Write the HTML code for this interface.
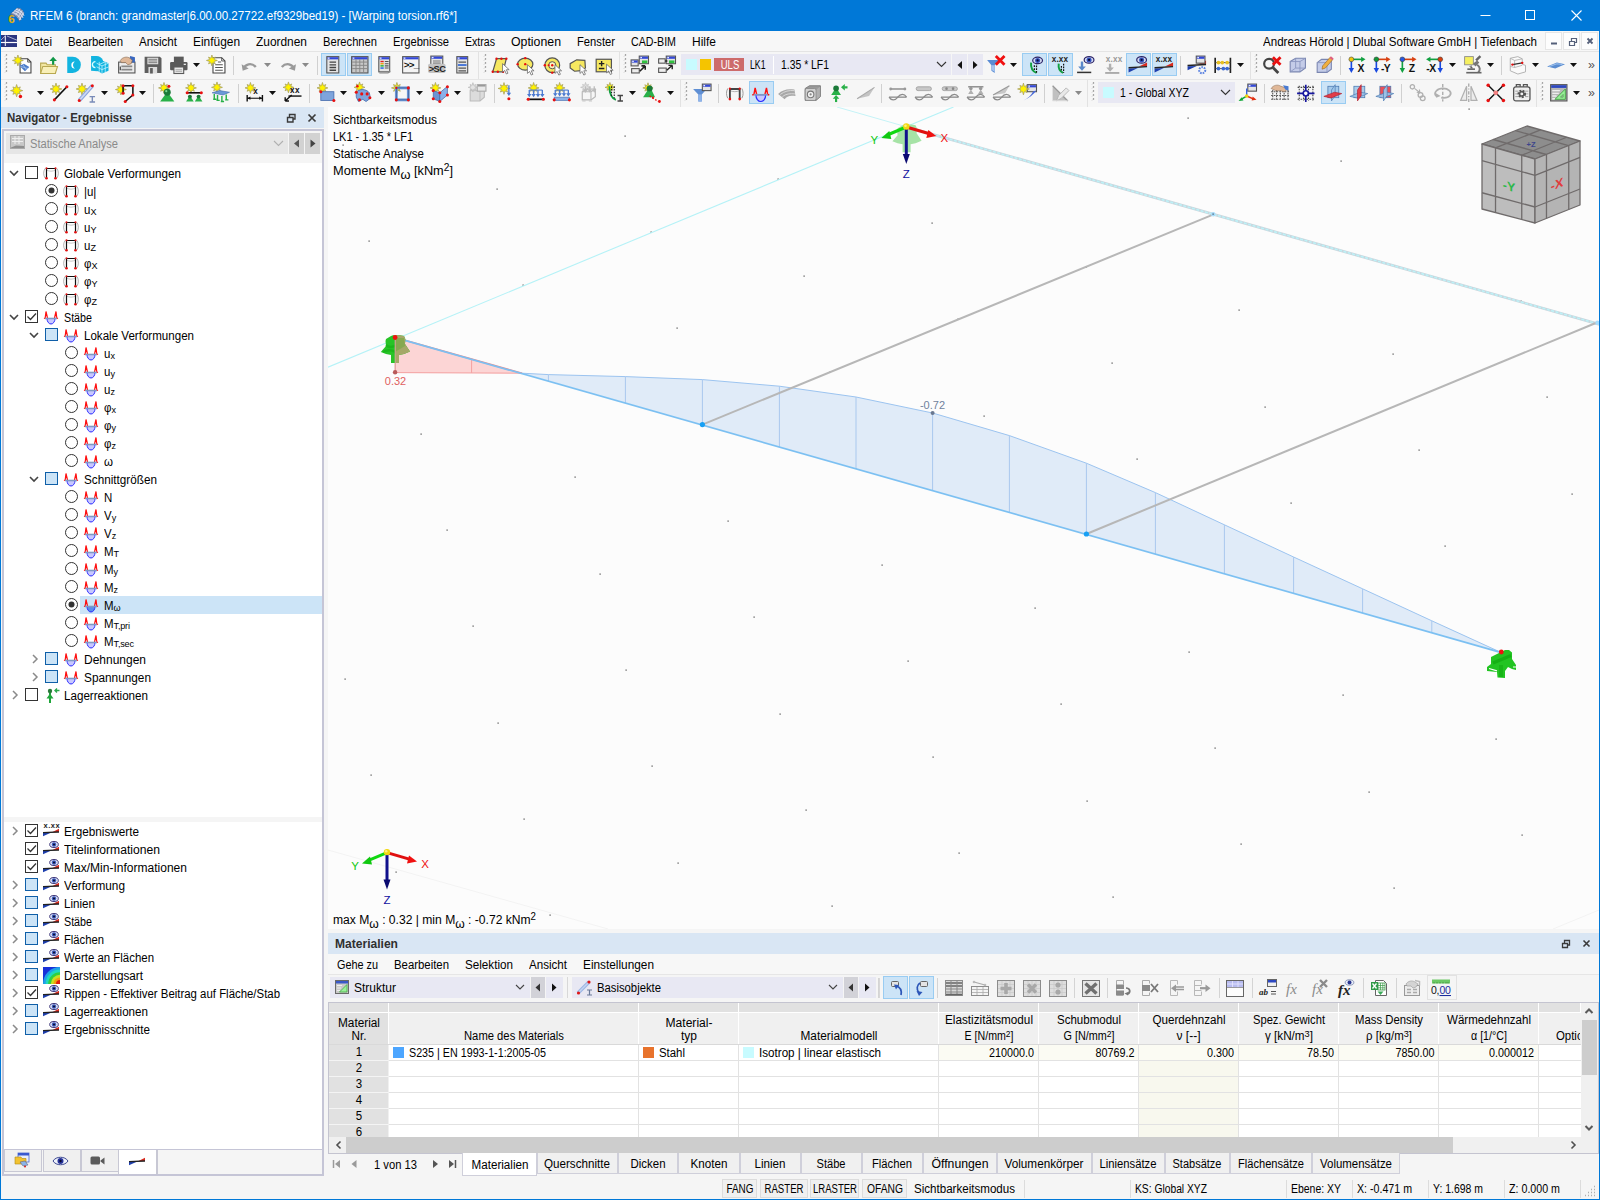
<!DOCTYPE html>
<html lang="de"><head><meta charset="utf-8"><title>RFEM 6</title><style>
html,body{margin:0;padding:0}
body{width:1600px;height:1200px;position:relative;overflow:hidden;background:#f5f5f5;font:12px "Liberation Sans",sans-serif;color:#000}
.a{position:absolute}
.t{position:absolute;white-space:nowrap}
svg{overflow:visible}
svg text{font-family:"Liberation Sans",sans-serif}
svg text.sf{font-family:"Liberation Serif",serif}
sub,sup{line-height:0}
.sb{font-size:9.5px;position:relative;top:1px;letter-spacing:-.2px}
.s2{font-size:100%;vertical-align:-3.5px}
.s3{font-size:10px;vertical-align:4px}
.s4{font-size:9.5px;vertical-align:3px}
</style></head><body>
<div class="a" style="left:0px;top:0px;width:1600px;height:31px;background:#0078d7;"></div>
<svg class="a" style="left:8px;top:7px;" width="17" height="17" viewBox="0 0 17 17"><path d="M2.500 7L9.500 1c3 0 5.500 2 6.500 5.500L11.500 14.500C10.500 11 7 8 2.500 7z" fill="#8f9ab8" stroke="#5a6484" stroke-width=".6"/><path d="M4.500 5.500c4 .8 7.500 4 8.500 7.500M6.500 3.700c4 .8 7.500 4 8.500 7.200M8 2.300c4 .8 7 3.500 8 6.500" stroke="#e8eefc" stroke-width=".9" fill="none"/><path d="M9.500 1L4.500 6.200M12 1.800L7.500 8M14.200 3.500L10 10.500M15.600 5.500L11.200 13" stroke="#dfe6f8" stroke-width=".8" fill="none"/><text x=".5" y="15.500" font-size="11" font-weight="bold" fill="#f2c21a" stroke="#a88408" stroke-width=".3">6</text></svg>
<span class="t " style="top:7.5px;line-height:16px;height:16px;color:#fff;transform:scaleX(0.9655);transform-origin:0 50%;left:30px;">RFEM 6 (branch: grandmaster|6.00.00.27722.ef9329bed19) - [Warping torsion.rf6*]</span>
<svg class="a" style="left:1470px;top:0px;" width="130" height="31" viewBox="0 0 130 31"><path d="M10.5 15.5h10" stroke="#fff" stroke-width="1" fill="none"/><rect x="55.5" y="10.5" width="9" height="9" stroke="#fff" fill="none"/><path d="M101.5 10.500l10 10M111.5 10.5l-10 10" stroke="#fff" stroke-width="1.1" fill="none"/></svg>
<div class="a" style="left:1px;top:31px;width:1598px;height:20px;background:#f7f7f7;"></div>
<div class="a" style="left:1px;top:51px;width:1598px;height:1px;background:#e4e4e4;"></div>
<svg class="a" style="left:1px;top:35px;" width="16" height="12" viewBox="0 0 16 12"><rect x="0" y="0" width="16" height="12" fill="#2a3580"/><path d="M0 7.500h16" stroke="#fff" stroke-width="1.200" fill="none"/><path d="M4.300 .5v10.500" stroke="#fff" stroke-width="1"/><path d="M0 5L4 1.200M6 1l10 4.200" stroke="#e0e4f4" stroke-width=".7" fill="none"/></svg>
<span class="t " style="top:33.5px;line-height:16px;height:16px;transform:scaleX(0.9637);transform-origin:0 50%;left:25px;">Datei</span>
<span class="t " style="top:33.5px;line-height:16px;height:16px;transform:scaleX(0.9475);transform-origin:0 50%;left:68px;">Bearbeiten</span>
<span class="t " style="top:33.5px;line-height:16px;height:16px;transform:scaleX(0.9655);transform-origin:0 50%;left:139px;">Ansicht</span>
<span class="t " style="top:33.5px;line-height:16px;height:16px;transform:scaleX(0.9921);transform-origin:0 50%;left:193px;">Einfügen</span>
<span class="t " style="top:33.5px;line-height:16px;height:16px;transform:scaleX(0.9927);transform-origin:0 50%;left:256px;">Zuordnen</span>
<span class="t " style="top:33.5px;line-height:16px;height:16px;transform:scaleX(0.9303);transform-origin:0 50%;left:323px;">Berechnen</span>
<span class="t " style="top:33.5px;line-height:16px;height:16px;transform:scaleX(0.9326);transform-origin:0 50%;left:393px;">Ergebnisse</span>
<span class="t " style="top:33.5px;line-height:16px;height:16px;transform:scaleX(0.8819);transform-origin:0 50%;left:465px;">Extras</span>
<span class="t " style="top:33.5px;line-height:16px;height:16px;transform:scaleX(1.0266);transform-origin:0 50%;left:511px;">Optionen</span>
<span class="t " style="top:33.5px;line-height:16px;height:16px;transform:scaleX(0.9339);transform-origin:0 50%;left:577px;">Fenster</span>
<span class="t " style="top:33.5px;line-height:16px;height:16px;transform:scaleX(0.8881);transform-origin:0 50%;left:631px;">CAD-BIM</span>
<span class="t " style="top:33.5px;line-height:16px;height:16px;transform:scaleX(0.9993);transform-origin:0 50%;left:692px;">Hilfe</span>
<span class="t " style="top:33.5px;line-height:16px;height:16px;transform:scaleX(0.9635);transform-origin:0 50%;left:1263px;">Andreas Hörold | Dlubal Software GmbH | Tiefenbach</span>
<div class="a" style="left:1545px;top:32px;width:17px;height:18px;background:#fdfdfd;box-sizing:border-box;border:1px solid #e6e6e6;"></div>
<div class="a" style="left:1563px;top:32px;width:17px;height:18px;background:#fdfdfd;box-sizing:border-box;border:1px solid #e6e6e6;"></div>
<div class="a" style="left:1581px;top:32px;width:17px;height:18px;background:#fdfdfd;box-sizing:border-box;border:1px solid #e6e6e6;"></div>
<svg class="a" style="left:1545px;top:32px;" width="54" height="18" viewBox="0 0 54 18"><path d="M6 11.5h6" stroke="#55607a" stroke-width="2"/><path d="M24.5 9.5h5v4h-5zM26.500 9V6.5h5v4H30" stroke="#55607a" stroke-width="1.2" fill="none"/><path d="M42.500 6.500l5 5M47.5 6.500l-5 5" stroke="#55607a" stroke-width="1.8"/></svg>
<div class="a" style="left:1px;top:52px;width:1598px;height:27px;background:#f6f6f6;"></div>
<div class="a" style="left:1px;top:79px;width:1598px;height:1px;background:#e6e6e6;"></div>
<div class="a" style="left:1px;top:80px;width:1598px;height:27px;background:#f6f6f6;"></div>
<svg class="a" style="left:4px;top:54px;" width="4" height="22" viewBox="0 0 4 22"><path d="M2 1.500l1-1M2 5.500l1-1M2 9.500l1-1M2 13.500l1-1M2 17.500l1-1" stroke="#888" stroke-width="1.200"/><path d="M1 2.500l1-1M1 6.500l1-1M1 10.500l1-1M1 14.500l1-1M1 18.500l1-1" stroke="#c8c8c8" stroke-width="1"/></svg>
<svg class="a" style="left:4px;top:82px;" width="4" height="22" viewBox="0 0 4 22"><path d="M2 1.500l1-1M2 5.500l1-1M2 9.500l1-1M2 13.500l1-1M2 17.500l1-1" stroke="#888" stroke-width="1.200"/><path d="M1 2.500l1-1M1 6.500l1-1M1 10.500l1-1M1 14.500l1-1M1 18.500l1-1" stroke="#c8c8c8" stroke-width="1"/></svg>
<svg class="a" style="left:13.2px;top:55.2px" width="19.6" height="19.6" viewBox="0 0 18 18"><path d="M6.500 3.500h7l3 3v10h-10z" fill="#fff" stroke="#444"/><path d="M13.500 3.500v3h3" fill="none" stroke="#444" stroke-width=".8"/><path d="M6 10l4-2 5 3-4 4z" fill="#4a7ac8"/><path d="M7 10.500l7 2M9 8.500l3 5" stroke="#a8c8f0" stroke-width=".7"/><path d="M4.5 -0.0L5.4 2.9L7.6 1.9L6.6 4.1L9.5 5.0L6.6 5.9L7.6 8.1L5.4 7.1L4.5 10.0L3.6 7.1L1.4 8.1L2.4 5.9L-0.5 5.0L2.4 4.1L1.4 1.9L3.6 2.9z" fill="#fff200" stroke="#a8a060" stroke-width=".7"/></svg>
<svg class="a" style="left:39.2px;top:55.2px" width="19.6" height="19.6" viewBox="0 0 18 18"><path d="M1.500 7.500h5l1 1.500h7.500v8H1.500z" fill="#f2e6a0" stroke="#b8a850"/><path d="M1.500 17l2-6.500h13.500l-2 6.500z" fill="#f8efb8" stroke="#b8a850"/><path d="M12 9V5.500h-2.500L13 1.500l3.500 4H14V9z" fill="#109848"/></svg>
<svg class="a" style="left:64.2px;top:55.2px" width="19.6" height="19.6" viewBox="0 0 18 18"><path d="M3 1.500h5a7.500 7.500 0 0 1 0 15H3z" fill="#12b4e0"/><path d="M10 6a3.300 3.300 0 1 0 0 6.600 4 4 0 0 1 0-6.600z" fill="#fff"/></svg>
<svg class="a" style="left:90.2px;top:55.2px" width="19.6" height="19.6" viewBox="0 0 18 18"><path d="M1 1h5a7 7 0 0 1 6 4L7 15l-6-.5z" fill="#12b4e0"/><path d="M5 6a2.800 2.800 0 1 0 0 5.600" fill="none" stroke="#dff" stroke-width="1.200"/><path d="M11 5l6 2.500v7L11 17 6 14V7.500z" fill="#12b4e0"/><path d="M6 7.500l5 2.500 6-2.500M11 10v7M6 10.800l5 2.600 6-2.400M8.500 6.300V15.500M14 6.200v9.500M8.500 8.700l5.500-2.500" stroke="#c8f4ff" stroke-width=".7" fill="none"/></svg>
<svg class="a" style="left:117.2px;top:55.2px" width="19.6" height="19.6" viewBox="0 0 18 18"><rect x="1.500" y="6.500" width="15" height="10" fill="#ececec" stroke="#555"/><path d="M4 10.500h10M4 13.500h10" stroke="#888" stroke-width="1.600"/><path d="M3 10.500v3.500" stroke="#333" stroke-width="1"/><path d="M12 1l4.500 1v5h-5z" fill="#3a68c0"/><path d="M3 5c2-3 6-4 9-2l2 2-1 3-3 1-2-2-4 0z" fill="#e0b898" stroke="#8a6a50" stroke-width=".6"/></svg>
<svg class="a" style="left:143.2px;top:55.2px" width="19.6" height="19.6" viewBox="0 0 18 18"><path d="M1.500 1.500h14l1.500 1.500v13.500h-15.500z" fill="#5e5e5e"/><rect x="4" y="2.500" width="10" height="6" fill="#dcdcdc"/><path d="M5 4h8M5 5.500h8M5 7h8" stroke="#777" stroke-width=".8"/><rect x="5" y="11" width="8" height="6" fill="#dcdcdc"/><rect x="6.500" y="12" width="2.500" height="5" fill="#5e5e5e"/></svg>
<svg class="a" style="left:169.2px;top:55.2px" width="19.6" height="19.6" viewBox="0 0 18 18"><rect x="4.500" y="1.500" width="9" height="5" fill="#5a5a5a"/><rect x="1" y="6.500" width="16" height="7.500" rx="1" fill="#5a5a5a"/><rect x="4.500" y="11" width="9" height="6" fill="#e8e8e8" stroke="#5a5a5a"/><path d="M6 13.500h6M6 15h6" stroke="#999" stroke-width=".7"/><rect x="13.500" y="8" width="2" height="1.200" fill="#eee"/></svg>
<svg class="a" style="left:207.2px;top:55.2px" width="19.6" height="19.6" viewBox="0 0 18 18"><path d="M5.500 2.500h8l3 3v11h-11z" fill="#fff" stroke="#444"/><path d="M13.500 2.500v3h3" fill="none" stroke="#444" stroke-width=".8"/><path d="M7.500 9h7M7.500 11.500h7M7.500 14h7M10 6.500h3" stroke="#555" stroke-width="1"/><path d="M4.5 -0.0L5.4 2.9L7.6 1.9L6.6 4.1L9.5 5.0L6.6 5.9L7.6 8.1L5.4 7.1L4.5 10.0L3.6 7.1L1.4 8.1L2.4 5.9L-0.5 5.0L2.4 4.1L1.4 1.9L3.6 2.9z" fill="#fff200" stroke="#a8a060" stroke-width=".7"/></svg>
<svg class="a" style="left:193px;top:63px;" width="8" height="5" viewBox="0 0 8 5"><path d="M0 0h7l-3.500 4z" fill="#111"/></svg>
<div class="a" style="left:233px;top:56px;width:1px;height:19px;background:#d0d0d0;"></div>
<svg class="a" style="left:240.2px;top:55.2px" width="19.6" height="19.6" viewBox="0 0 18 18"><path d="M3.500 12.500c1-4 7-6 11-1.500" stroke="#9a9a9a" stroke-width="2.200" fill="none"/><path d="M1.500 8.500l1 6 5.500-2z" fill="#9a9a9a"/></svg>
<svg class="a" style="left:264px;top:63px;" width="8" height="5" viewBox="0 0 8 5"><path d="M0 0h7l-3.500 4z" fill="#8a8a8a"/></svg>
<svg class="a" style="left:278.2px;top:55.2px" width="19.6" height="19.6" viewBox="0 0 18 18"><path d="M14.500 12.500c-1-4-7-6-11-1.500" stroke="#9a9a9a" stroke-width="2.200" fill="none"/><path d="M16.500 8.500l-1 6-5.500-2z" fill="#9a9a9a"/></svg>
<svg class="a" style="left:302px;top:63px;" width="8" height="5" viewBox="0 0 8 5"><path d="M0 0h7l-3.500 4z" fill="#8a8a8a"/></svg>
<div class="a" style="left:317px;top:56px;width:1px;height:19px;background:#d0d0d0;"></div>
<div class="a" style="left:321px;top:53px;width:25px;height:23px;background:#cce4f7;box-sizing:border-box;border:1px solid #99ccf2;"></div>
<div class="a" style="left:347px;top:53px;width:25px;height:23px;background:#cce4f7;box-sizing:border-box;border:1px solid #99ccf2;"></div>
<svg class="a" style="left:323.2px;top:55.2px" width="19.6" height="19.6" viewBox="0 0 18 18"><rect x="3.5" y="1.5" width="11" height="15" fill="#e4e4e4" stroke="#555" stroke-width="1"/><rect x="4.0" y="2.0" width="10" height="2" fill="#3348d8"/><rect x="4.5" y="2.3" width="1.500" height="1.200" fill="#e8ecff"/><path d="M6 6.500h6M6 9h6M6 11.500h6M6 14h6" stroke="#444" stroke-width="1.200"/></svg>
<svg class="a" style="left:350.2px;top:55.2px" width="19.6" height="19.6" viewBox="0 0 18 18"><rect x="1.5" y="1.5" width="15" height="15" fill="#c8c8c8" stroke="#555" stroke-width="1"/><rect x="2.0" y="2.0" width="14" height="2" fill="#3348d8"/><rect x="2.5" y="2.3" width="1.500" height="1.200" fill="#e8ecff"/><path d="M2 6.500h14M2 9.500h14M2 12.500h14M5.500 4v12M9 4v12M12.500 4v12" stroke="#888" stroke-width=".9"/></svg>
<svg class="a" style="left:375.2px;top:55.2px" width="19.6" height="19.6" viewBox="0 0 18 18"><rect x="3.5" y="1.5" width="10" height="14" fill="#e4e4e4" stroke="#555" stroke-width="1"/><rect x="4.0" y="2.0" width="9" height="2" fill="#3348d8"/><rect x="4.5" y="2.3" width="1.500" height="1.200" fill="#e8ecff"/><path d="M5 6h3" stroke="#e02020" stroke-width="1.300"/><path d="M5 8h3" stroke="#f0a010" stroke-width="1.300"/><path d="M5 10h3" stroke="#20b030" stroke-width="1.300"/><path d="M5 12h3" stroke="#2060e0" stroke-width="1.300"/><path d="M9 6h3.500M9 8h3.500M9 10h3.500M9 12h3.500" stroke="#555" stroke-width="1"/><path d="M4 16.500h8l2-2" stroke="#888" fill="none"/></svg>
<svg class="a" style="left:401.2px;top:55.2px" width="19.6" height="19.6" viewBox="0 0 18 18"><rect x="1.5" y="1.5" width="15" height="15" fill="#f4f4f4" stroke="#555" stroke-width="1"/><rect x="2.0" y="2.0" width="14" height="2" fill="#3348d8"/><rect x="2.5" y="2.3" width="1.500" height="1.200" fill="#e8ecff"/><text x="2.500" y="11.500" font-size="9" font-weight="bold" fill="#111" letter-spacing="-.6">&gt;&gt;_</text></svg>
<svg class="a" style="left:427.2px;top:55.2px" width="19.6" height="19.6" viewBox="0 0 18 18"><rect x="3.5" y="1" width="11" height="9" fill="#e4e4e4" stroke="#555" stroke-width="1"/><rect x="4.0" y="1.5" width="10" height="2" fill="#3348d8"/><rect x="4.5" y="1.8" width="1.500" height="1.200" fill="#e8ecff"/><path d="M5.500 5.500h7M5.500 7.500h7" stroke="#777"/><rect x="1" y="8" width="16" height="8.500" rx="1.500" fill="#c4c4c4"/><text x="1.500" y="15.500" font-size="8.500" font-weight="bold" fill="#222" letter-spacing="-.4">&gt;SC</text></svg>
<svg class="a" style="left:453.2px;top:55.2px" width="19.6" height="19.6" viewBox="0 0 18 18"><rect x="3.5" y="1.5" width="10" height="15" fill="#e4e4e4" stroke="#555" stroke-width="1"/><rect x="4.0" y="2.0" width="9" height="2" fill="#3348d8"/><rect x="4.5" y="2.3" width="1.500" height="1.200" fill="#e8ecff"/><path d="M5 6.500h7M5 12h7M5 14.500h7" stroke="#555" stroke-width="1.100"/><path d="M4.500 9.200h8" stroke="#4a78d8" stroke-width="1.800"/></svg>
<div class="a" style="left:478px;top:52px;width:1px;height:27px;background:#e2e2e2;"></div>
<svg class="a" style="left:483px;top:54px;" width="4" height="22" viewBox="0 0 4 22"><path d="M2 1.500l1-1M2 5.500l1-1M2 9.500l1-1M2 13.500l1-1M2 17.500l1-1" stroke="#888" stroke-width="1.200"/><path d="M1 2.500l1-1M1 6.500l1-1M1 10.500l1-1M1 14.500l1-1M1 18.500l1-1" stroke="#c8c8c8" stroke-width="1"/></svg>
<svg class="a" style="left:490.2px;top:56.2px" width="19.6" height="19.6" viewBox="0 0 18 18"><path d="M6 2.500h9L12 14.500H2.500z" fill="#f6e860" stroke="#555" stroke-width="1.100"/><circle cx="6" cy="2.5" r="1.1" fill="#e81010"/><circle cx="15" cy="2.5" r="1.1" fill="#e81010"/><circle cx="2.5" cy="14.5" r="1.1" fill="#e81010"/><circle cx="12" cy="14.5" r="1.1" fill="#e81010"/><circle cx="10.5" cy="2.5" r="1.1" fill="#e81010"/><circle cx="7.2" cy="14.5" r="1.1" fill="#e81010"/><path d="M11.5 7v8l2-1.800 1.500 3.300 1.500-.7-1.500-3.200h2.600z" fill="#fff" stroke="#666" stroke-width=".7"/></svg>
<svg class="a" style="left:516.2px;top:56.2px" width="19.6" height="19.6" viewBox="0 0 18 18"><ellipse cx="8.500" cy="7.500" rx="7" ry="5.500" fill="#f6e860" stroke="#555" stroke-width="1.100"/><circle cx="8.5" cy="2" r="1.1" fill="#e81010"/><circle cx="1.5" cy="7.5" r="1.1" fill="#e81010"/><circle cx="8.5" cy="7.5" r="1.1" fill="#e81010"/><path d="M10.5 8v8l2-1.800 1.500 3.300 1.500-.7-1.500-3.200h2.600z" fill="#fff" stroke="#666" stroke-width=".7"/></svg>
<svg class="a" style="left:543.2px;top:56.2px" width="19.6" height="19.6" viewBox="0 0 18 18"><circle cx="8.500" cy="8.500" r="6.800" fill="#f6e860" stroke="#555" stroke-width="1.100"/><circle cx="8.500" cy="8.500" r="3.300" fill="#fbf6c0" stroke="#555" stroke-width=".9"/><circle cx="8.5" cy="8.5" r="1.1" fill="#e81010"/><circle cx="1.7" cy="8.5" r="1.1" fill="#e81010"/><circle cx="8.5" cy="15.3" r="1.1" fill="#e81010"/><circle cx="5.2" cy="8.5" r="1" fill="#e81010"/><path d="M11 8v8l2-1.800 1.500 3.300 1.500-.7-1.500-3.200h2.600z" fill="#fff" stroke="#666" stroke-width=".7"/></svg>
<svg class="a" style="left:568.2px;top:56.2px" width="19.6" height="19.6" viewBox="0 0 18 18"><path d="M2 7l6-3.500 7.500.5L16 11l-4 2.500-6 .5-4-3z" fill="#f6e860" stroke="#555" stroke-width="1.100"/><path d="M11 8v8l2-1.800 1.500 3.300 1.500-.7-1.500-3.200h2.600z" fill="#fff" stroke="#666" stroke-width=".7"/></svg>
<svg class="a" style="left:594.2px;top:56.2px" width="19.6" height="19.6" viewBox="0 0 18 18"><rect x="2" y="3" width="14" height="11.500" fill="#f6e860" stroke="#555" stroke-width="1.100"/><path d="M4.500 7h5M7 4.500v5M4.500 11.500h5" stroke="#222" stroke-width="1.300"/><path d="M11.5 7.5v8l2-1.800 1.500 3.300 1.500-.7-1.500-3.200h2.600z" fill="#fff" stroke="#666" stroke-width=".7"/></svg>
<div class="a" style="left:619px;top:52px;width:1px;height:27px;background:#e2e2e2;"></div>
<svg class="a" style="left:623px;top:54px;" width="4" height="22" viewBox="0 0 4 22"><path d="M2 1.500l1-1M2 5.500l1-1M2 9.500l1-1M2 13.500l1-1M2 17.500l1-1" stroke="#888" stroke-width="1.200"/><path d="M1 2.500l1-1M1 6.500l1-1M1 10.500l1-1M1 14.500l1-1M1 18.500l1-1" stroke="#c8c8c8" stroke-width="1"/></svg>
<svg class="a" style="left:630.2px;top:55.2px" width="19.6" height="19.6" viewBox="0 0 18 18"><rect x="8.5" y="1" width="8.5" height="7" fill="#e4e4e4" stroke="#555" stroke-width="1"/><rect x="9.0" y="1.5" width="7.5" height="2" fill="#3348d8"/><rect x="9.5" y="1.8" width="1.500" height="1.200" fill="#e8ecff"/><rect x="11" y="5" width="5" height="2.500" fill="#30c040"/><rect x="1" y="4.5" width="6.5" height="5.5" fill="#e4e4e4" stroke="#555" stroke-width="1"/><rect x="1.5" y="5.0" width="5.5" height="2" fill="#3348d8"/><rect x="2" y="5.3" width="1.500" height="1.200" fill="#e8ecff"/><rect x="1.500" y="12.500" width="7" height="4" fill="#eee" stroke="#555"/><path d="M9 15l5-5M14 10v3.500M14 10h-3.500" stroke="#222" stroke-width="1.400" fill="none"/></svg>
<svg class="a" style="left:657.2px;top:55.2px" width="19.6" height="19.6" viewBox="0 0 18 18"><rect x="8.5" y="1" width="8.5" height="7" fill="#e4e4e4" stroke="#555" stroke-width="1"/><rect x="9.0" y="1.5" width="7.5" height="2" fill="#3348d8"/><rect x="9.5" y="1.8" width="1.500" height="1.200" fill="#e8ecff"/><rect x="11" y="5" width="5" height="2.500" fill="#30c040"/><rect x="1.500" y="3.500" width="6" height="4" fill="#eee" stroke="#555"/><rect x="1.500" y="12" width="7" height="4" fill="#eee" stroke="#555"/><path d="M7.500 5.500h2M9 14l5-4.500M14 9.500v3.500M14 9.500h-3.500" stroke="#222" stroke-width="1.300" fill="none"/></svg>
<div class="a" style="left:681px;top:54px;width:270px;height:21px;background:#e8e8f3;"></div>
<div class="a" style="left:686px;top:59px;width:11px;height:11px;background:#c8fbff;"></div>
<div class="a" style="left:700px;top:59px;width:11px;height:11px;background:#f5c400;"></div>
<div class="a" style="left:714px;top:58px;width:30px;height:13px;background:#cd6b6b;"></div>
<span class="t " style="top:56.5px;line-height:16px;height:16px;color:#fff;transform:scaleX(0.7925);transform-origin:50% 50%;left:429.5px;width:600px;text-align:center;">ULS</span>
<span class="t " style="top:56.5px;line-height:16px;height:16px;transform:scaleX(0.7257);transform-origin:0 50%;left:749.5px;">LK1</span>
<div class="a" style="left:773px;top:56px;width:1px;height:18px;background:#fff;"></div>
<span class="t " style="top:56.5px;line-height:16px;height:16px;transform:scaleX(0.8668);transform-origin:0 50%;left:781px;">1.35 * LF1</span>
<svg class="a" style="left:936px;top:61px;" width="12" height="7" viewBox="0 0 12 7"><path d="M1 1l4.500 4.500L10 1" stroke="#333" stroke-width="1.100" fill="none"/></svg>
<div class="a" style="left:952px;top:54px;width:15px;height:21px;background:#e8e8f3;"></div>
<div class="a" style="left:968px;top:54px;width:15px;height:21px;background:#e8e8f3;"></div>
<svg class="a" style="left:952px;top:54px;" width="31" height="22" viewBox="0 0 31 22"><path d="M10 7v8l-4.500-4z" fill="#111"/><path d="M21 7v8l4.500-4z" fill="#111"/></svg>
<svg class="a" style="left:986.2px;top:55.2px" width="19.6" height="19.6" viewBox="0 0 18 18"><path d="M1 4.500h11l-4 5v7l-3-2V9.500z" fill="#5a8cd4"/><path d="M5.500 9.500h2.500v6l-2.500-1.500z" fill="#a4c4f0"/><path d="M9 1l8 8M17 1l-8 8" stroke="#f01010" stroke-width="2.600"/></svg>
<svg class="a" style="left:1010px;top:63px;" width="8" height="5" viewBox="0 0 8 5"><path d="M0 0h7l-3.500 4z" fill="#111"/></svg>
<div class="a" style="left:1022px;top:53px;width:25px;height:23px;background:#cce4f7;box-sizing:border-box;border:1px solid #99ccf2;"></div>
<div class="a" style="left:1048px;top:53px;width:25px;height:23px;background:#cce4f7;box-sizing:border-box;border:1px solid #99ccf2;"></div>
<svg class="a" style="left:1024.2px;top:55.2px" width="19.6" height="19.6" viewBox="0 0 18 18"><path d="M6.500 7c-.5 5 1.500 8 5 9.500" stroke="#12a040" stroke-width="1.800" fill="none"/><path d="M11.500 7v9.500M9.500 9.500v5" stroke="#111" stroke-width="1.100" stroke-dasharray="1.600 1"/><ellipse cx="12.5" cy="5" rx="4.500" ry="3" fill="#d4dcf2" stroke="#2c2468" stroke-width="1.100"/><circle cx="12.5" cy="5" r="2.300" fill="#3452c0"/><circle cx="12.5" cy="5" r="1" fill="#0a0a30"/></svg>
<svg class="a" style="left:1050.2px;top:55.2px" width="19.6" height="19.6" viewBox="0 0 18 18"><path d="M8 8c-.5 4 1 7 4 8.500" stroke="#12a040" stroke-width="1.800" fill="none"/><path d="M12.500 8v8.500M10.500 10v5" stroke="#111" stroke-width="1.100" stroke-dasharray="1.600 1"/><text x="1.5" y="6.5" font-size="7.5" font-weight="bold" fill="#222" letter-spacing=".2">x.xx</text></svg>
<svg class="a" style="left:1076.2px;top:55.2px" width="19.6" height="19.6" viewBox="0 0 18 18"><path d="M5.500 6v5" stroke="#5a88c8" stroke-width="2.200"/><path d="M2 10.500h7l-3.500 4z" fill="#5a88c8"/><path d="M1 16h13" stroke="#333" stroke-width="1.400"/><ellipse cx="12" cy="4.5" rx="4.500" ry="3" fill="#d4dcf2" stroke="#2c2468" stroke-width="1.100"/><circle cx="12" cy="4.5" r="2.300" fill="#3452c0"/><circle cx="12" cy="4.5" r="1" fill="#0a0a30"/></svg>
<svg class="a" style="left:1103.2px;top:55.2px" width="19.6" height="19.6" viewBox="0 0 18 18"><path d="M6.500 8v4" stroke="#b0b0b0" stroke-width="2.200"/><path d="M3 11.500h7l-3.500 4z" fill="#b0b0b0"/><path d="M2 16.500h13" stroke="#999" stroke-width="1.400"/><text x="2.5" y="6.5" font-size="7.5" font-weight="bold" fill="#999" letter-spacing=".2">x.xx</text></svg>
<div class="a" style="left:1126px;top:53px;width:25px;height:23px;background:#cce4f7;box-sizing:border-box;border:1px solid #99ccf2;"></div>
<div class="a" style="left:1152px;top:53px;width:25px;height:23px;background:#cce4f7;box-sizing:border-box;border:1px solid #99ccf2;"></div>
<svg class="a" style="left:1128.2px;top:55.2px" width="19.6" height="19.6" viewBox="0 0 18 18"><path d="M.5 12.3V16L9 12z" fill="#1e3fae"/><path d="M10 10.6L17.500 7V10.6z" fill="#d62a1e"/><path d="M.5 11.7L17.500 10.7" stroke="#222" stroke-width="1.300"/><ellipse cx="12.5" cy="4.5" rx="4.500" ry="3" fill="#d4dcf2" stroke="#2c2468" stroke-width="1.100"/><circle cx="12.5" cy="4.5" r="2.300" fill="#3452c0"/><circle cx="12.5" cy="4.5" r="1" fill="#0a0a30"/></svg>
<svg class="a" style="left:1154.2px;top:55.2px" width="19.6" height="19.6" viewBox="0 0 18 18"><path d="M.5 12.3V16L9 12z" fill="#1e3fae"/><path d="M10 10.6L17.500 7V10.6z" fill="#d62a1e"/><path d="M.5 11.7L17.500 10.7" stroke="#222" stroke-width="1.300"/><text x="1.5" y="6.5" font-size="7.5" font-weight="bold" fill="#222" letter-spacing=".2">x.xx</text></svg>
<div class="a" style="left:1180px;top:56px;width:1px;height:19px;background:#d0d0d0;"></div>
<svg class="a" style="left:1187.2px;top:55.2px" width="19.6" height="19.6" viewBox="0 0 18 18"><path d="M.5 10.3V14L9 10z" fill="#1e3fae"/><path d="M10 8.6L17.500 5V8.6z" fill="#d62a1e"/><path d="M.5 9.7L17.500 8.7" stroke="#222" stroke-width="1.300"/><rect x="8.5" y="1" width="8" height="6.5" fill="#e4e4e4" stroke="#555" stroke-width="1"/><rect x="9.0" y="1.5" width="7" height="2" fill="#3348d8"/><rect x="9.5" y="1.8" width="1.500" height="1.200" fill="#e8ecff"/><circle cx="14" cy="14" r="2.800" fill="none" stroke="#5a82e0" stroke-width="1.800" stroke-dasharray="1.500 .9"/></svg>
<svg class="a" style="left:1213.2px;top:55.2px" width="19.6" height="19.6" viewBox="0 0 18 18"><path d="M2 2.500v14M16 2.500v14" stroke="#222" stroke-width="1.500"/><path d="M2 7h14M2 12.500h14" stroke="#444" stroke-width=".8"/><circle cx="5" cy="7" r="1.700" fill="#e8c020"/><circle cx="8.500" cy="7" r="1.700" fill="#e8c020"/><circle cx="13" cy="7" r="1.700" fill="#e8c020"/><circle cx="5" cy="12.500" r="1.700" fill="#3a68d0"/><circle cx="9.500" cy="12.500" r="1.700" fill="#3a68d0"/><circle cx="13" cy="12.500" r="1.700" fill="#3a68d0"/></svg>
<svg class="a" style="left:1237px;top:63px;" width="8" height="5" viewBox="0 0 8 5"><path d="M0 0h7l-3.500 4z" fill="#111"/></svg>
<div class="a" style="left:1250px;top:52px;width:1px;height:27px;background:#e2e2e2;"></div>
<svg class="a" style="left:1254px;top:54px;" width="4" height="22" viewBox="0 0 4 22"><path d="M2 1.500l1-1M2 5.500l1-1M2 9.500l1-1M2 13.500l1-1M2 17.500l1-1" stroke="#888" stroke-width="1.200"/><path d="M1 2.500l1-1M1 6.500l1-1M1 10.500l1-1M1 14.500l1-1M1 18.500l1-1" stroke="#c8c8c8" stroke-width="1"/></svg>
<svg class="a" style="left:1262.2px;top:55.2px" width="19.6" height="19.6" viewBox="0 0 18 18"><circle cx="6.500" cy="8" r="4.500" fill="none" stroke="#444" stroke-width="2"/><path d="M10 11.500l5 5" stroke="#444" stroke-width="2.600"/><path d="M10 2l7 7M17 2l-7 7" stroke="#e81010" stroke-width="2.600"/></svg>
<svg class="a" style="left:1288.2px;top:55.2px" width="19.6" height="19.6" viewBox="0 0 18 18"><path d="M2 6l5-3h9v9l-5 3.500H2z" fill="#c4cce8" stroke="#7a86b0"/><path d="M2 6h9v9.500M11 6l5-3M7 3v9H16M7 12l-5 3.500" stroke="#8a96c0" stroke-width=".8" fill="none"/></svg>
<svg class="a" style="left:1315.2px;top:55.2px" width="19.6" height="19.6" viewBox="0 0 18 18"><path d="M2 7l4-3h9v9l-4 3H2z" fill="#c4cce8" stroke="#7a86b0"/><path d="M2 7h9v9M11 7l4-3" stroke="#8a96c0" stroke-width=".8" fill="none"/><path d="M7 10l7-8 2.500 2-7 8-3 1z" fill="#f0b040" stroke="#a06a20" stroke-width=".6"/><path d="M14 2l2.500 2" stroke="#e06080" stroke-width="2"/></svg>
<div class="a" style="left:1340px;top:56px;width:1px;height:19px;background:#d0d0d0;"></div>
<svg class="a" style="left:1347.2px;top:55.2px" width="19.6" height="19.6" viewBox="0 0 18 18"><path d="M4 4h10" stroke="#10a040" stroke-width="1.500"/><path d="M13 1.500l4 2.500-4 2.500z" fill="#10a040"/><path d="M4 4v9" stroke="#1848e0" stroke-width="1.500"/><path d="M1.500 12h5L4 16.500z" fill="#1848e0"/><circle cx="4" cy="4" r="2.200" fill="#f0c810" stroke="#333" stroke-width=".5"/><text x="12.500" y="16" font-size="9.500" font-weight="bold" fill="#111" text-anchor="middle" letter-spacing="-.5">X</text></svg>
<svg class="a" style="left:1372.2px;top:55.2px" width="19.6" height="19.6" viewBox="0 0 18 18"><path d="M4 4h10" stroke="#d84010" stroke-width="1.500"/><path d="M13 1.500l4 2.500-4 2.500z" fill="#d84010"/><path d="M4 4v9" stroke="#1848e0" stroke-width="1.500"/><path d="M1.500 12h5L4 16.500z" fill="#1848e0"/><circle cx="4" cy="4" r="2.200" fill="#109838" stroke="#333" stroke-width=".5"/><text x="12.500" y="16" font-size="9.500" font-weight="bold" fill="#111" text-anchor="middle" letter-spacing="-.5">-Y</text></svg>
<svg class="a" style="left:1398.2px;top:55.2px" width="19.6" height="19.6" viewBox="0 0 18 18"><path d="M4 4h10" stroke="#d84010" stroke-width="1.500"/><path d="M13 1.500l4 2.500-4 2.500z" fill="#d84010"/><path d="M4 4v9" stroke="#10a040" stroke-width="1.500"/><path d="M1.500 12h5L4 16.500z" fill="#10a040"/><circle cx="4" cy="4" r="2.200" fill="#2858e0" stroke="#333" stroke-width=".5"/><text x="12.500" y="16" font-size="9.500" font-weight="bold" fill="#111" text-anchor="middle" letter-spacing="-.5">Z</text></svg>
<svg class="a" style="left:1425.2px;top:55.2px" width="19.6" height="19.6" viewBox="0 0 18 18"><path d="M14 4H4" stroke="#10a040" stroke-width="1.500"/><path d="M5 1.500L1 4l4 2.500z" fill="#10a040"/><path d="M14 4v9" stroke="#1848e0" stroke-width="1.500"/><path d="M11.500 12h5L14 16.500z" fill="#1848e0"/><circle cx="14" cy="4" r="2.200" fill="#d84010" stroke="#333" stroke-width=".5"/><text x="5.500" y="16" font-size="9.500" font-weight="bold" fill="#111" text-anchor="middle" letter-spacing="-.5">-X</text></svg>
<svg class="a" style="left:1449px;top:63px;" width="8" height="5" viewBox="0 0 8 5"><path d="M0 0h7l-3.500 4z" fill="#111"/></svg>
<svg class="a" style="left:1463.2px;top:55.2px" width="19.6" height="19.6" viewBox="0 0 18 18"><rect x="1.500" y="1.500" width="8" height="7.500" fill="#f6f060" stroke="#888" stroke-width=".8"/><path d="M12 5l4-4" stroke="#666" stroke-width="2.200"/><path d="M9 8l4-3 2 2-3.500 3.500z" fill="#777"/><path d="M13 9c3 2 3 5 1 7" stroke="#777" stroke-width="1.800" fill="none"/><path d="M3 17h14v-1.500H3z" fill="#666"/><path d="M4 13h7" stroke="#666" stroke-width="1.500"/><path d="M6 10.500l3 1.500M7.500 9.500v3" stroke="#555" stroke-width=".8"/></svg>
<svg class="a" style="left:1487px;top:63px;" width="8" height="5" viewBox="0 0 8 5"><path d="M0 0h7l-3.500 4z" fill="#111"/></svg>
<div class="a" style="left:1501px;top:56px;width:1px;height:19px;background:#d0d0d0;"></div>
<svg class="a" style="left:1507.2px;top:55.2px" width="19.6" height="19.6" viewBox="0 0 18 18"><path d="M3 3l7-1.500 4 2v5l3 1v6l-7 2-7-3z" fill="#fafafa" stroke="#aaa" stroke-width=".8"/><path d="M3 3l4 2 7-1.500M7 5v6.500l-4-1M7 11.500l7-2" stroke="#aaa" stroke-width=".7" fill="none"/><path d="M5 8.800l9-1.600" stroke="#333" stroke-width="1.300"/><circle cx="5" cy="8.8" r="1.1" fill="#e81010"/><circle cx="14" cy="7.2" r="1.1" fill="#e81010"/></svg>
<svg class="a" style="left:1532px;top:63px;" width="8" height="5" viewBox="0 0 8 5"><path d="M0 0h7l-3.500 4z" fill="#111"/></svg>
<svg class="a" style="left:1546.2px;top:55.2px" width="19.6" height="19.6" viewBox="0 0 18 18"><path d="M1 10.500l9-3.500 7.500 1.500-9 4z" fill="#5a8cd0"/><path d="M3 10.500l7-2.500 5 .8" stroke="#9cc0ec" stroke-width="1" fill="none"/></svg>
<svg class="a" style="left:1570px;top:63px;" width="8" height="5" viewBox="0 0 8 5"><path d="M0 0h7l-3.500 4z" fill="#111"/></svg>
<span class="t " style="top:56.5px;line-height:16px;height:16px;font-size:13px;color:#555;transform:scaleX(0.9550);transform-origin:0 50%;left:1588px;">»</span>
<svg class="a" style="left:9.2px;top:83.2px" width="19.6" height="19.6" viewBox="0 0 18 18"><path d="M7.0 1.4L8.0 4.6L10.4 3.6L9.4 6.0L12.6 7.0L9.4 8.0L10.4 10.4L8.0 9.4L7.0 12.6L6.0 9.4L3.6 10.4L4.6 8.0L1.4 7.0L4.6 6.0L3.6 3.6L6.0 4.6z" fill="#fff200" stroke="#a8a060" stroke-width=".7"/><circle cx="10.5" cy="12.5" r="1.6" fill="#e81010"/></svg>
<svg class="a" style="left:37px;top:91px;" width="8" height="5" viewBox="0 0 8 5"><path d="M0 0h7l-3.500 4z" fill="#111"/></svg>
<svg class="a" style="left:50.2px;top:83.2px" width="19.6" height="19.6" viewBox="0 0 18 18"><path d="M5.5 0.1L6.4 3.2L8.8 2.2L7.8 4.6L10.9 5.5L7.8 6.4L8.8 8.8L6.4 7.8L5.5 10.9L4.6 7.8L2.2 8.8L3.2 6.4L0.1 5.5L3.2 4.6L2.2 2.2L4.6 3.2z" fill="#fff200" stroke="#a8a060" stroke-width=".7"/><path d="M4 15.500L15.500 3.500" stroke="#111" stroke-width="1.500"/><circle cx="4" cy="15.5" r="1.4" fill="#e81010"/><circle cx="15.5" cy="3.5" r="1.4" fill="#e81010"/></svg>
<svg class="a" style="left:76.2px;top:83.2px" width="19.6" height="19.6" viewBox="0 0 18 18"><path d="M5.5 0.1L6.4 3.2L8.8 2.2L7.8 4.6L10.9 5.5L7.8 6.4L8.8 8.8L6.4 7.8L5.5 10.9L4.6 7.8L2.2 8.8L3.2 6.4L0.1 5.5L3.2 4.6L2.2 2.2L4.6 3.2z" fill="#fff200" stroke="#a8a060" stroke-width=".7"/><path d="M3 16L15 2.500" stroke="#8aa4dc" stroke-width="3.500"/><path d="M3 16L15 2.500" stroke="#ccd8f4" stroke-width="1.500"/><circle cx="3" cy="16" r="1.4" fill="#e81010"/><circle cx="15" cy="2.5" r="1.4" fill="#e81010"/><path d="M12.500 12.500h5M15 12.500v5M12.500 17.500h5" stroke="#7a8cb8" stroke-width="1.300"/></svg>
<svg class="a" style="left:101px;top:91px;" width="8" height="5" viewBox="0 0 8 5"><path d="M0 0h7l-3.500 4z" fill="#111"/></svg>
<svg class="a" style="left:116.2px;top:83.2px" width="19.6" height="19.6" viewBox="0 0 18 18"><path d="M4.5 1.0L5.4 3.9L7.6 2.9L6.6 5.1L9.5 6.0L6.6 6.9L7.6 9.1L5.4 8.1L4.5 11.0L3.6 8.1L1.4 9.1L2.4 6.9L-0.5 6.0L2.4 5.1L1.4 2.9L3.6 3.9z" fill="#fff200" stroke="#a8a060" stroke-width=".7"/><path d="M6.500 9V2.500h9V11l-7 6" stroke="#111" stroke-width="1.400" fill="none"/><circle cx="6.5" cy="2.5" r="1.4" fill="#e81010"/><circle cx="15.5" cy="2.5" r="1.4" fill="#e81010"/><circle cx="6.5" cy="9.5" r="1.4" fill="#e81010"/><circle cx="15.5" cy="11" r="1.4" fill="#e81010"/><circle cx="8.5" cy="17" r="1.4" fill="#e81010"/></svg>
<svg class="a" style="left:139px;top:91px;" width="8" height="5" viewBox="0 0 8 5"><path d="M0 0h7l-3.500 4z" fill="#111"/></svg>
<div class="a" style="left:153px;top:84px;width:1px;height:19px;background:#d0d0d0;"></div>
<svg class="a" style="left:158.2px;top:83.2px" width="19.6" height="19.6" viewBox="0 0 18 18"><path d="M5.5 -0.5L6.4 2.4L8.6 1.4L7.6 3.6L10.5 4.5L7.6 5.4L8.6 7.6L6.4 6.6L5.5 9.5L4.6 6.6L2.4 7.6L3.4 5.4L0.5 4.5L3.4 3.6L2.4 1.4L4.6 2.4z" fill="#fff200" stroke="#a8a060" stroke-width=".7"/><circle cx="10" cy="3" r="1.4" fill="#e81010"/><path d="M2 17l5-7h3l5 7z" fill="#28b048"/><circle cx="8.500" cy="8.500" r="3.200" fill="#1a7a38"/><circle cx="7.600" cy="7.500" r="1" fill="#7ad890"/></svg>
<svg class="a" style="left:185.2px;top:83.2px" width="19.6" height="19.6" viewBox="0 0 18 18"><path d="M5.5 -0.5L6.4 2.4L8.6 1.4L7.6 3.6L10.5 4.5L7.6 5.4L8.6 7.6L6.4 6.6L5.5 9.5L4.6 6.6L2.4 7.6L3.4 5.4L0.5 4.5L3.4 3.6L2.4 1.4L4.6 2.4z" fill="#fff200" stroke="#a8a060" stroke-width=".7"/><path d="M2 9h13" stroke="#111" stroke-width="1.500"/><circle cx="2" cy="9" r="1.4" fill="#e81010"/><circle cx="15" cy="9" r="1.4" fill="#e81010"/><path d="M1 17l2.500-4h2l2.500 4zM9 17l2.500-4h2l2.500 4z" fill="#28b048"/><circle cx="4.500" cy="12.500" r="1.800" fill="#1a7a38"/><circle cx="12.500" cy="12.500" r="1.800" fill="#1a7a38"/></svg>
<svg class="a" style="left:211.2px;top:83.2px" width="19.6" height="19.6" viewBox="0 0 18 18"><path d="M5.5 -1.0L6.4 1.9L8.6 0.9L7.6 3.1L10.5 4.0L7.6 4.9L8.6 7.1L6.4 6.1L5.5 9.0L4.6 6.1L2.4 7.1L3.4 4.9L0.5 4.0L3.4 3.1L2.4 0.9L4.6 1.9z" fill="#fff200" stroke="#a8a060" stroke-width=".7"/><path d="M1 9l7-2 9 1.500-6 2.500z" fill="#6a9ad8" stroke="#4a70b0" stroke-width=".6"/><path d="M3 10v5M6 11v5M10 12v5M14 10.500v5M2 15h3M5 16h3M9 17h3M13 15.500h3" stroke="#28b048" stroke-width="1.300"/></svg>
<div class="a" style="left:238px;top:84px;width:1px;height:19px;background:#d0d0d0;"></div>
<svg class="a" style="left:245.2px;top:83.2px" width="19.6" height="19.6" viewBox="0 0 18 18"><path d="M5.0 -0.5L5.9 2.4L8.1 1.4L7.1 3.6L10.0 4.5L7.1 5.4L8.1 7.6L5.9 6.6L5.0 9.5L4.1 6.6L1.9 7.6L2.9 5.4L-0.0 4.5L2.9 3.6L1.9 1.4L4.1 2.4z" fill="#fff200" stroke="#a8a060" stroke-width=".7"/><path d="M2 11v6M16 11v6" stroke="#111" stroke-width="1.300"/><path d="M2 14h14" stroke="#111" stroke-width="1"/><path d="M2 14l3-1.500v3zM16 14l-3-1.500v3z" fill="#111"/><text x="7.500" y="10.500" font-size="7.500" font-weight="bold" fill="#111">x</text></svg>
<svg class="a" style="left:269px;top:91px;" width="8" height="5" viewBox="0 0 8 5"><path d="M0 0h7l-3.500 4z" fill="#111"/></svg>
<svg class="a" style="left:283.2px;top:83.2px" width="19.6" height="19.6" viewBox="0 0 18 18"><path d="M5.0 -1.0L5.9 1.9L8.1 0.9L7.1 3.1L10.0 4.0L7.1 4.9L8.1 7.1L5.9 6.1L5.0 9.0L4.1 6.1L1.9 7.1L2.9 4.9L-0.0 4.0L2.9 3.1L1.9 0.9L4.1 1.9z" fill="#fff200" stroke="#a8a060" stroke-width=".7"/><text x="6.500" y="9.500" font-size="7.500" font-weight="bold" fill="#111" letter-spacing=".4">xx</text><path d="M5 12h12" stroke="#111" stroke-width="1.300"/><path d="M8 11l-6 5.500M2 16.500v-3.500M2 16.500h3.500" stroke="#111" stroke-width="1.300" fill="none"/></svg>
<div class="a" style="left:309px;top:84px;width:1px;height:19px;background:#d0d0d0;"></div>
<svg class="a" style="left:317.2px;top:83.2px" width="19.6" height="19.6" viewBox="0 0 18 18"><path d="M5.0 -0.5L5.9 2.4L8.1 1.4L7.1 3.6L10.0 4.5L7.1 5.4L8.1 7.6L5.9 6.6L5.0 9.5L4.1 6.6L1.9 7.6L2.9 5.4L-0.0 4.5L2.9 3.6L1.9 1.4L4.1 2.4z" fill="#fff200" stroke="#a8a060" stroke-width=".7"/><rect x="3.500" y="8" width="12" height="8" fill="#7ea4dc" stroke="#4a70b0" stroke-width=".8"/><circle cx="3.5" cy="8" r="1.4" fill="#e81010"/><circle cx="15.5" cy="16" r="1.4" fill="#e81010"/></svg>
<svg class="a" style="left:340px;top:91px;" width="8" height="5" viewBox="0 0 8 5"><path d="M0 0h7l-3.500 4z" fill="#111"/></svg>
<svg class="a" style="left:353.2px;top:83.2px" width="19.6" height="19.6" viewBox="0 0 18 18"><path d="M6.0 -1.0L6.9 1.9L9.1 0.9L8.1 3.1L11.0 4.0L8.1 4.9L9.1 7.1L6.9 6.1L6.0 9.0L5.1 6.1L2.9 7.1L3.9 4.9L1.0 4.0L3.9 3.1L2.9 0.9L5.1 1.9z" fill="#fff200" stroke="#a8a060" stroke-width=".7"/><path d="M3 9c2-4 9-4 12 0l1 5-4 3-3-2-4 2-2-4z" fill="#7ea4dc" stroke="#4a70b0" stroke-width=".8"/><circle cx="3" cy="8.5" r="1.4" fill="#e81010"/><circle cx="8" cy="10" r="1.4" fill="#e81010"/><circle cx="13" cy="10" r="1.4" fill="#e81010"/><circle cx="6" cy="15.5" r="1.4" fill="#e81010"/><circle cx="15.5" cy="13.5" r="1.4" fill="#e81010"/><circle cx="4" cy="3" r="1.2" fill="#e81010"/></svg>
<svg class="a" style="left:378px;top:91px;" width="8" height="5" viewBox="0 0 8 5"><path d="M0 0h7l-3.500 4z" fill="#111"/></svg>
<svg class="a" style="left:392.2px;top:83.2px" width="19.6" height="19.6" viewBox="0 0 18 18"><path d="M4.5 -0.5L5.4 2.4L7.6 1.4L6.6 3.6L9.5 4.5L6.6 5.4L7.6 7.6L5.4 6.6L4.5 9.5L3.6 6.6L1.4 7.6L2.4 5.4L-0.5 4.5L2.4 3.6L1.4 1.4L3.6 2.4z" fill="#fff200" stroke="#a8a060" stroke-width=".7"/><rect x="4" y="4.500" width="11" height="11" fill="none" stroke="#6a94d4" stroke-width="2.600"/><rect x="4" y="4.500" width="11" height="11" fill="none" stroke="#3a5c98" stroke-width=".6"/><circle cx="4" cy="15.5" r="1.4" fill="#e81010"/><circle cx="15" cy="15.5" r="1.4" fill="#e81010"/><circle cx="15" cy="4.5" r="1.4" fill="#e81010"/><circle cx="4" cy="4.5" r="1" fill="#e81010"/></svg>
<svg class="a" style="left:416px;top:91px;" width="8" height="5" viewBox="0 0 8 5"><path d="M0 0h7l-3.500 4z" fill="#111"/></svg>
<svg class="a" style="left:430.2px;top:83.2px" width="19.6" height="19.6" viewBox="0 0 18 18"><path d="M5.0 -0.5L5.9 2.4L8.1 1.4L7.1 3.6L10.0 4.5L7.1 5.4L8.1 7.6L5.9 6.6L5.0 9.5L4.1 6.6L1.9 7.6L2.9 5.4L-0.0 4.5L2.9 3.6L1.9 1.4L4.1 2.4z" fill="#fff200" stroke="#a8a060" stroke-width=".7"/><path d="M3 7l6 2v8l-6-2.500z" fill="#6a94d4" stroke="#3a5c98" stroke-width=".6"/><path d="M9 9l7-6v8l-7 6z" fill="#8ab0e8" stroke="#3a5c98" stroke-width=".6"/><circle cx="3" cy="7" r="1.4" fill="#e81010"/><circle cx="3" cy="14.5" r="1.4" fill="#e81010"/><circle cx="9" cy="17" r="1.4" fill="#e81010"/><circle cx="9" cy="9" r="1.4" fill="#e81010"/><circle cx="16" cy="3.5" r="1.4" fill="#e81010"/><circle cx="16" cy="11" r="1.4" fill="#e81010"/></svg>
<svg class="a" style="left:454px;top:91px;" width="8" height="5" viewBox="0 0 8 5"><path d="M0 0h7l-3.500 4z" fill="#111"/></svg>
<svg class="a" style="left:468.2px;top:83.2px" width="19.6" height="19.6" viewBox="0 0 18 18"><path d="M2 7l4-3h9v9l-4 3.500H2z" fill="#dcdcdc" stroke="#bbb"/><path d="M2 7h9v9.500M11 7l4-3" stroke="#bbb" stroke-width=".8" fill="none"/><rect x="8.500" y="1.500" width="8" height="6" fill="#e8e8e8" stroke="#aaa"/><path d="M9 2.500h7" stroke="#999" stroke-width="1.500"/><path d="M4.5 -0.3L5.2 2.2L7.1 1.4L6.3 3.3L8.8 4.0L6.3 4.7L7.1 6.6L5.2 5.8L4.5 8.3L3.8 5.8L1.9 6.6L2.7 4.7L0.2 4.0L2.7 3.3L1.9 1.4L3.8 2.2z" fill="#e4e4e4" stroke="#bbb" stroke-width=".7"/></svg>
<div class="a" style="left:494px;top:84px;width:1px;height:19px;background:#d0d0d0;"></div>
<svg class="a" style="left:498.2px;top:83.2px" width="19.6" height="19.6" viewBox="0 0 18 18"><path d="M5.5 -0.4L6.4 2.7L8.8 1.7L7.8 4.1L10.9 5.0L7.8 5.9L8.8 8.3L6.4 7.3L5.5 10.4L4.6 7.3L2.2 8.3L3.2 5.9L0.1 5.0L3.2 4.1L2.2 1.7L4.6 2.7z" fill="#fff200" stroke="#a8a060" stroke-width=".7"/><path d="M10 2V10" stroke="#4a7ad0" stroke-width="1.200"/><path d="M8 9h4L10 12z" fill="#4a7ad0"/><circle cx="10" cy="14.5" r="1.4" fill="#e81010"/></svg>
<svg class="a" style="left:526.2px;top:83.2px" width="19.6" height="19.6" viewBox="0 0 18 18"><path d="M7.0 -0.5L7.9 2.4L10.1 1.4L9.1 3.6L12.0 4.5L9.1 5.4L10.1 7.6L7.9 6.6L7.0 9.5L6.1 6.6L3.9 7.6L4.9 5.4L2.0 4.5L4.9 3.6L3.9 1.4L6.1 2.4z" fill="#fff200" stroke="#a8a060" stroke-width=".7"/><path d="M3 6.500h12" stroke="#4a7ad0" stroke-width="1"/><path d="M3 6.5V11" stroke="#4a7ad0" stroke-width="1.200"/><path d="M1 10h4L3 13z" fill="#4a7ad0"/><path d="M7 6.5V11" stroke="#4a7ad0" stroke-width="1.200"/><path d="M5 10h4L7 13z" fill="#4a7ad0"/><path d="M11 6.5V11" stroke="#4a7ad0" stroke-width="1.200"/><path d="M9 10h4L11 13z" fill="#4a7ad0"/><path d="M15 6.5V11" stroke="#4a7ad0" stroke-width="1.200"/><path d="M13 10h4L15 13z" fill="#4a7ad0"/><path d="M2 15h14" stroke="#111" stroke-width="1.600"/><circle cx="2" cy="15" r="1.4" fill="#e81010"/><circle cx="16" cy="15" r="1.4" fill="#e81010"/></svg>
<svg class="a" style="left:552.2px;top:83.2px" width="19.6" height="19.6" viewBox="0 0 18 18"><path d="M7.0 -0.5L7.9 2.4L10.1 1.4L9.1 3.6L12.0 4.5L9.1 5.4L10.1 7.6L7.9 6.6L7.0 9.5L6.1 6.6L3.9 7.6L4.9 5.4L2.0 4.5L4.9 3.6L3.9 1.4L6.1 2.4z" fill="#fff200" stroke="#a8a060" stroke-width=".7"/><path d="M3 6.500h12" stroke="#4a7ad0" stroke-width="1"/><path d="M3 6.5V10.5" stroke="#4a7ad0" stroke-width="1.200"/><path d="M1 9.5h4L3 12.5z" fill="#4a7ad0"/><path d="M7 6.5V10.5" stroke="#4a7ad0" stroke-width="1.200"/><path d="M5 9.5h4L7 12.5z" fill="#4a7ad0"/><path d="M11 6.5V10.5" stroke="#4a7ad0" stroke-width="1.200"/><path d="M9 9.5h4L11 12.5z" fill="#4a7ad0"/><path d="M15 6.5V10.5" stroke="#4a7ad0" stroke-width="1.200"/><path d="M13 9.5h4L15 12.5z" fill="#4a7ad0"/><rect x="2" y="13" width="14" height="3" fill="#8ab0e8" stroke="#4a70b0" stroke-width=".6"/><circle cx="2" cy="15.5" r="1.4" fill="#e81010"/><circle cx="16" cy="15.5" r="1.4" fill="#e81010"/></svg>
<svg class="a" style="left:579.2px;top:83.2px" width="19.6" height="19.6" viewBox="0 0 18 18"><path d="M6.0 -0.5L6.8 2.1L8.7 1.3L7.9 3.2L10.5 4.0L7.9 4.8L8.7 6.7L6.8 5.9L6.0 8.5L5.2 5.9L3.3 6.7L4.1 4.8L1.5 4.0L4.1 3.2L3.3 1.3L5.2 2.1z" fill="#e0e0e0" stroke="#c0c0c0" stroke-width=".7"/><path d="M3 8l4-2.500h8v7l-4 3H3z" fill="none" stroke="#b8b8b8" stroke-width="1.100"/><path d="M3 8h8v7.500M11 8l4-2.500" stroke="#b8b8b8" fill="none"/><path d="M6 3V7" stroke="#bcbcbc" stroke-width="1.200"/><path d="M4 6h4L6 9z" fill="#bcbcbc"/><path d="M10 3V7" stroke="#bcbcbc" stroke-width="1.200"/><path d="M8 6h4L10 9z" fill="#bcbcbc"/><path d="M14 3V7" stroke="#bcbcbc" stroke-width="1.200"/><path d="M12 6h4L14 9z" fill="#bcbcbc"/><path d="M3 16.500h3M9 16.500h3" stroke="#c8c8c8"/></svg>
<svg class="a" style="left:605.2px;top:83.2px" width="19.6" height="19.6" viewBox="0 0 18 18"><path d="M4.5 -0.5L5.3 2.1L7.2 1.3L6.4 3.2L9.0 4.0L6.4 4.8L7.2 6.7L5.3 5.9L4.5 8.5L3.7 5.9L1.8 6.7L2.6 4.8L0.0 4.0L2.6 3.2L1.8 1.3L3.7 2.1z" fill="#fff200" stroke="#a8a060" stroke-width=".7"/><path d="M4 3c0 8 2 11 6 12.500" stroke="#12a040" stroke-width="1.600" fill="none"/><path d="M6 3v9M8.500 3v11" stroke="#222" stroke-width="1" stroke-dasharray="1.500 1"/><path d="M11.500 11.500h5M14 11.500v5M11.500 16.500h5" stroke="#444" stroke-width="1.300"/></svg>
<svg class="a" style="left:629px;top:91px;" width="8" height="5" viewBox="0 0 8 5"><path d="M0 0h7l-3.500 4z" fill="#111"/></svg>
<svg class="a" style="left:642.2px;top:83.2px" width="19.6" height="19.6" viewBox="0 0 18 18"><path d="M5.5 -0.2L6.3 2.5L8.4 1.6L7.5 3.7L10.2 4.5L7.5 5.3L8.4 7.4L6.3 6.5L5.5 9.2L4.7 6.5L2.6 7.4L3.5 5.3L0.8 4.5L3.5 3.7L2.6 1.6L4.7 2.5z" fill="#fff200" stroke="#a8a060" stroke-width=".7"/><path d="M1 13l4-6h4l3 6z" fill="#28b048"/><circle cx="7" cy="5" r="2.800" fill="#1a7a38"/><path d="M7 12l8 5" stroke="#e81010" stroke-width="1.200" stroke-dasharray="1.500 1.500"/><circle cx="16" cy="17" r="1.3" fill="#e81010"/><circle cx="10" cy="13.5" r="1" fill="#e81010"/></svg>
<svg class="a" style="left:667px;top:91px;" width="8" height="5" viewBox="0 0 8 5"><path d="M0 0h7l-3.500 4z" fill="#111"/></svg>
<div class="a" style="left:680px;top:80px;width:1px;height:27px;background:#e2e2e2;"></div>
<svg class="a" style="left:684px;top:82px;" width="4" height="22" viewBox="0 0 4 22"><path d="M2 1.500l1-1M2 5.500l1-1M2 9.500l1-1M2 13.500l1-1M2 17.500l1-1" stroke="#888" stroke-width="1.200"/><path d="M1 2.500l1-1M1 6.500l1-1M1 10.500l1-1M1 14.500l1-1M1 18.500l1-1" stroke="#c8c8c8" stroke-width="1"/></svg>
<svg class="a" style="left:692.2px;top:83.2px" width="19.6" height="19.6" viewBox="0 0 18 18"><path d="M1 5.500h12.500L9 10.500v6.500H5.800v-6.500z" fill="#5f8fd4"/><path d="M5.800 10.500H9v6.500H5.800z" fill="#8fb4ea"/><rect x="9.5" y="1" width="8" height="6" fill="#e4e4e4" stroke="#555" stroke-width="1"/><rect x="10.0" y="1.5" width="7" height="2" fill="#3348d8"/><rect x="10.5" y="1.8" width="1.500" height="1.200" fill="#e8ecff"/></svg>
<div class="a" style="left:718px;top:84px;width:1px;height:19px;background:#d0d0d0;"></div>
<svg class="a" style="left:725.2px;top:83.2px" width="19.6" height="19.6" viewBox="0 0 18 18"><path d="M2.500 5c-1.500 3-1.500 6 0 9M15.500 5c1.500 3 1.500 6 0 9" stroke="#999" stroke-width=".9" fill="none"/><path d="M4.500 7c3 1.300 6 1.300 9 0" stroke="#aaa" stroke-width=".8" fill="none"/><path d="M4.500 14.500V5.500h9v9" stroke="#444" stroke-width="1.700" fill="none"/><circle cx="4.5" cy="14.8" r="1.2" fill="#e81010"/><circle cx="13.5" cy="14.8" r="1.2" fill="#e81010"/><circle cx="4.5" cy="5.2" r="1" fill="#e81010"/><circle cx="13.5" cy="5.2" r="1" fill="#e81010"/></svg>
<div class="a" style="left:749px;top:81px;width:25px;height:23px;background:#cce4f7;box-sizing:border-box;border:1px solid #99ccf2;"></div>
<svg class="a" style="left:751.2px;top:83.2px" width="19.6" height="19.6" viewBox="0 0 18 18"><path d="M4.500 10.800a4.500 6.200 0 0 0 9 0z" fill="#c8c8ff" stroke="#2a2aff" stroke-width="1.100"/><path d="M1.200 11l1.500-.5L3.800 4.500l1.400 6M16.800 11l-1.500-.5L14.200 4.500l-1.400 6" stroke="#ff1010" stroke-width="1.300" fill="none"/><path d="M2.500 10.800h13" stroke="#8099c4" stroke-width="1.500"/></svg>
<svg class="a" style="left:777.2px;top:83.2px" width="19.6" height="19.6" viewBox="0 0 18 18"><path d="M1 10c4-4 9-5 15-4l1 6c-5-1-8 0-10 3z" fill="#a8a8a8"/><path d="M3 10.500c4-3 8-4 13-3.500M5 12.500c3-2.500 7-3 11.500-2.500" stroke="#d8d8d8" stroke-width=".9" fill="none"/></svg>
<svg class="a" style="left:803.2px;top:83.2px" width="19.6" height="19.6" viewBox="0 0 18 18"><path d="M2 5l4-2.500h10v10L12 16H2z" fill="#9a9a9a" stroke="#777" stroke-width=".8"/><rect x="2" y="5" width="10" height="11" rx="1.500" fill="#d0d0d0" stroke="#888" stroke-width=".8"/><circle cx="7" cy="10.500" r="3" fill="#f0f0f0" stroke="#777"/><circle cx="7" cy="10.500" r="1" fill="#888"/><path d="M12.500 6l3-2.500v9l-3 2.500z" fill="#b0b0b0"/></svg>
<svg class="a" style="left:829.2px;top:83.2px" width="19.6" height="19.6" viewBox="0 0 18 18"><path d="M2 11l3-4.500h3l3 4.500z" fill="#28b048"/><circle cx="6.500" cy="5" r="2.600" fill="#1a7a38"/><path d="M6.500 17.500v-4" stroke="#28b048" stroke-width="2"/><path d="M3.500 14.500h6l-3-3.500z" fill="#28b048"/><path d="M17 4h-3" stroke="#28b048" stroke-width="2"/><path d="M14.500 1v6l-3.500-3z" fill="#28b048"/></svg>
<svg class="a" style="left:856.2px;top:83.2px" width="19.6" height="19.6" viewBox="0 0 18 18"><path d="M1 14.500L17 4l-5 8z" fill="#c4c4c4"/><path d="M1 14.500L17 4" stroke="#aaa" stroke-width="1"/></svg>
<div class="a" style="left:881px;top:84px;width:1px;height:19px;background:#d0d0d0;"></div>
<svg class="a" style="left:888.2px;top:83.2px" width="19.6" height="19.6" viewBox="0 0 18 18"><path d="M2.500 5.500h13" stroke="#888" stroke-width="1.300"/><circle cx="2.500" cy="5.500" r="1.300" fill="#999"/><circle cx="15.500" cy="5.500" r="1.300" fill="#999"/><path d="M1 13c2 3.400 5.500 3.400 8 0s6-3.400 8 0" stroke="#8a8a8a" stroke-width="1.200" fill="none"/><path d="M1 13h16" stroke="#8a8a8a" stroke-width="1.200"/></svg>
<svg class="a" style="left:914.2px;top:83.2px" width="19.6" height="19.6" viewBox="0 0 18 18"><rect x="2" y="3.500" width="14" height="3.500" rx="1.700" fill="#c8c8c8" stroke="#999" stroke-width=".7"/><path d="M1 13c2 3.400 5.500 3.400 8 0s6-3.400 8 0" stroke="#8a8a8a" stroke-width="1.200" fill="none"/><path d="M1 13h16" stroke="#8a8a8a" stroke-width="1.200"/></svg>
<svg class="a" style="left:940.2px;top:83.2px" width="19.6" height="19.6" viewBox="0 0 18 18"><rect x="2" y="3.500" width="14" height="3.500" rx="1.700" fill="#c8c8c8" stroke="#999" stroke-width=".7"/><circle cx="6" cy="5.200" r="1.200" fill="#888"/><circle cx="12" cy="5.200" r="1.200" fill="#888"/><path d="M1 13c2 3.400 5.500 3.400 8 0s6-3.400 8 0" stroke="#8a8a8a" stroke-width="1.200" fill="none"/><path d="M1 13h16" stroke="#8a8a8a" stroke-width="1.200"/></svg>
<svg class="a" style="left:966.2px;top:83.2px" width="19.6" height="19.6" viewBox="0 0 18 18"><path d="M2 3.500h14" stroke="#888" stroke-width="1.300"/><path d="M2 10l2.500-4 2.500 4zM11 10l2.500-4 2.500 4z" fill="#b0b0b0"/><circle cx="4.500" cy="5" r="1.600" fill="#999"/><circle cx="13.500" cy="5" r="1.600" fill="#999"/><path d="M1 13c2 3.400 5.500 3.400 8 0s6-3.400 8 0" stroke="#8a8a8a" stroke-width="1.200" fill="none"/><path d="M1 13h16" stroke="#8a8a8a" stroke-width="1.200"/></svg>
<svg class="a" style="left:992.2px;top:83.2px" width="19.6" height="19.6" viewBox="0 0 18 18"><path d="M1 11L16 2.500l-4 7z" fill="#c8c8c8"/><path d="M1 11L16 2.500" stroke="#999" stroke-width="1.100"/><path d="M1 13c2 3.400 5.500 3.400 8 0s6-3.400 8 0" stroke="#8a8a8a" stroke-width="1.200" fill="none"/><path d="M1 13h16" stroke="#8a8a8a" stroke-width="1.200"/></svg>
<svg class="a" style="left:1018.2px;top:83.2px" width="19.6" height="19.6" viewBox="0 0 18 18"><rect x="8.5" y="1.5" width="8.5" height="6.5" fill="#e4e4e4" stroke="#555" stroke-width="1"/><rect x="9.0" y="2.0" width="7.5" height="2" fill="#3348d8"/><rect x="9.5" y="2.3" width="1.500" height="1.200" fill="#e8ecff"/><path d="M5 16c5-2 9-5 12-9l-3 .5c-2 4-5 6.500-9 8.500z" fill="#4a6ad8"/><path d="M5.0 0.1L5.9 3.2L8.3 2.2L7.3 4.6L10.4 5.5L7.3 6.4L8.3 8.8L5.9 7.8L5.0 10.9L4.1 7.8L1.7 8.8L2.7 6.4L-0.4 5.5L2.7 4.6L1.7 2.2L4.1 3.2z" fill="#fff200" stroke="#a8a060" stroke-width=".7"/></svg>
<div class="a" style="left:1044px;top:84px;width:1px;height:19px;background:#d0d0d0;"></div>
<svg class="a" style="left:1051.2px;top:83.2px" width="19.6" height="19.6" viewBox="0 0 18 18"><path d="M1.500 2.500v14h14z" fill="#c0c0c0"/><path d="M1.500 2.500l14 14" stroke="#999" stroke-width="1.200"/><path d="M5 16.500l2-5 7-7 2.500 2.500-7 7z" fill="#e8e8e8" stroke="#b0b0b0" stroke-width=".8"/><path d="M1.500 16.500h14" stroke="#e8e8e8" stroke-width="1"/></svg>
<svg class="a" style="left:1075px;top:91px;" width="8" height="5" viewBox="0 0 8 5"><path d="M0 0h7l-3.500 4z" fill="#8a8a8a"/></svg>
<div class="a" style="left:1087px;top:80px;width:1px;height:27px;background:#e2e2e2;"></div>
<svg class="a" style="left:1091px;top:82px;" width="4" height="22" viewBox="0 0 4 22"><path d="M2 1.500l1-1M2 5.500l1-1M2 9.500l1-1M2 13.500l1-1M2 17.500l1-1" stroke="#888" stroke-width="1.200"/><path d="M1 2.500l1-1M1 6.500l1-1M1 10.500l1-1M1 14.500l1-1M1 18.500l1-1" stroke="#c8c8c8" stroke-width="1"/></svg>
<div class="a" style="left:1098px;top:82px;width:137px;height:21px;background:#e8e8f3;"></div>
<div class="a" style="left:1103px;top:87px;width:11px;height:11px;background:#c8fbff;"></div>
<span class="t " style="top:84.5px;line-height:16px;height:16px;transform:scaleX(0.8767);transform-origin:0 50%;left:1120px;">1 - Global XYZ</span>
<svg class="a" style="left:1220px;top:89px;" width="12" height="7" viewBox="0 0 12 7"><path d="M1 1l4.500 4.500L10 1" stroke="#333" stroke-width="1.100" fill="none"/></svg>
<svg class="a" style="left:1238.2px;top:83.2px" width="19.6" height="19.6" viewBox="0 0 18 18"><rect x="9" y="1" width="8" height="6.5" fill="#e4e4e4" stroke="#555" stroke-width="1"/><rect x="9.5" y="1.5" width="7" height="2" fill="#3348d8"/><rect x="10" y="1.8" width="1.500" height="1.200" fill="#e8ecff"/><path d="M8 12V5" stroke="#2858e0" stroke-width="1.200"/><path d="M8 12l7 3" stroke="#e03010" stroke-width="1.400"/><path d="M13.500 12.500l3.500 3-4.500.5z" fill="#e03010"/><path d="M8 12l-6 3.500" stroke="#10a838" stroke-width="1.400"/><path d="M3.500 13l-3 3.500 4.500-.5z" fill="#10a838"/><circle cx="8" cy="12" r="1.600" fill="#f0d010"/></svg>
<div class="a" style="left:1264px;top:84px;width:1px;height:19px;background:#d0d0d0;"></div>
<svg class="a" style="left:1270.2px;top:83.2px" width="19.6" height="19.6" viewBox="0 0 18 18"><path d="M2.500 6.500v10M6 6.500v10M9.500 6.500v10M13 6.500v10M16.500 6.500v10M1 8h17M1 11.500h17M1 15h17" stroke="#555" stroke-width="1" stroke-dasharray="1.500 1"/><path d="M1 5c2-3 6-4 9-2l3 1 3 2-3 2-4-1-4 0z" fill="#e0b898" stroke="#8a6a50" stroke-width=".5"/><path d="M12 2l5 1v4l-3-1z" fill="#4a7ad0"/></svg>
<svg class="a" style="left:1296.2px;top:83.2px" width="19.6" height="19.6" viewBox="0 0 18 18"><path d="M3 2.500v14M7 2.500v14M11.500 2.500v14M15.500 2.500v14M1.500 4h15M1.500 15h15" stroke="#444" stroke-width="1" stroke-dasharray="1.500 1.200"/><path d="M1 9.500h16M9 1.500v16" stroke="#1818a0" stroke-width="1.500"/><circle cx="9" cy="9.500" r="2.400" fill="#fff" stroke="#1818a0" stroke-width="1.500"/></svg>
<div class="a" style="left:1321px;top:81px;width:25px;height:23px;background:#cce4f7;box-sizing:border-box;border:1px solid #99ccf2;"></div>
<svg class="a" style="left:1323.2px;top:83.2px" width="19.6" height="19.6" viewBox="0 0 18 18"><rect x="4.500" y="3" width="10" height="10.500" fill="#9cc4e8" stroke="#4a78b0" stroke-width=".7" fill-opacity=".85"/><path d="M7.800 16.500V6.500L11.200 1.500v10z" fill="#9cc4e8" stroke="#4a78b0" stroke-width=".6" fill-opacity=".92"/><path d="M.8 12.300L10.500 8.500l6.700 1.200L7.500 13.800z" fill="#e8323c" stroke="#b02030" stroke-width=".6" fill-opacity=".92"/></svg>
<svg class="a" style="left:1349.2px;top:83.2px" width="19.6" height="19.6" viewBox="0 0 18 18"><rect x="4.500" y="3" width="10" height="10.500" fill="#9cc4e8" stroke="#4a78b0" stroke-width=".7" fill-opacity=".85"/><path d="M.8 12.300L10.500 8.500l6.700 1.200L7.500 13.800z" fill="#9cc4e8" stroke="#4a78b0" stroke-width=".6" fill-opacity=".92"/><path d="M7.800 16.500V6.500L11.200 1.500v10z" fill="#e8323c" stroke="#b02030" stroke-width=".6" fill-opacity=".92"/></svg>
<svg class="a" style="left:1375.2px;top:83.2px" width="19.6" height="19.6" viewBox="0 0 18 18"><rect x="4.500" y="3" width="10" height="10.500" fill="#e8323c" stroke="#4a78b0" stroke-width=".7" fill-opacity=".85"/><path d="M.8 12.300L10.500 8.500l6.700 1.200L7.500 13.800z" fill="#9cc4e8" stroke="#4a78b0" stroke-width=".6" fill-opacity=".92"/><path d="M7.800 16.500V6.500L11.200 1.500v10z" fill="#9cc4e8" stroke="#4a78b0" stroke-width=".6" fill-opacity=".92"/></svg>
<div class="a" style="left:1401px;top:84px;width:1px;height:19px;background:#d0d0d0;"></div>
<svg class="a" style="left:1408.2px;top:83.2px" width="19.6" height="19.6" viewBox="0 0 18 18"><circle cx="4" cy="3.500" r="2" fill="none" stroke="#b0b0b0" stroke-width="1.200"/><path d="M6 5l5 4M11 9l-3-.5M11 9l-.5-3" stroke="#b0b0b0" stroke-width="1" fill="none"/><circle cx="11.500" cy="11" r="2.200" fill="none" stroke="#b0b0b0" stroke-width="1.200"/><circle cx="13.500" cy="14" r="2.200" fill="none" stroke="#b0b0b0" stroke-width="1.200"/></svg>
<svg class="a" style="left:1433.2px;top:83.2px" width="19.6" height="19.6" viewBox="0 0 18 18"><path d="M9 1v16" stroke="#999" stroke-width="1" stroke-dasharray="3 1.500 1 1.500"/><path d="M3 12c-3-3 1-7 6-7s9 3 6.500 6.500c-1.500 2-5 2.500-8 2" stroke="#b0b0b0" stroke-width="1.600" fill="none"/><path d="M2 9l1 4.500 4-1.500z" fill="#b0b0b0"/></svg>
<svg class="a" style="left:1459.2px;top:83.2px" width="19.6" height="19.6" viewBox="0 0 18 18"><path d="M9 .5v17" stroke="#999" stroke-width="1" stroke-dasharray="3 1.500 1 1.500"/><path d="M7 3v13H1.500zM11 3v13h5.500z" fill="#ececec" stroke="#b0b0b0" stroke-width="1.100"/></svg>
<svg class="a" style="left:1486.2px;top:83.2px" width="19.6" height="19.6" viewBox="0 0 18 18"><path d="M2 2l14 14M16 2L2 16" stroke="#111" stroke-width="1.300"/><circle cx="9" cy="9" r="2.200" fill="#f08080"/><circle cx="2" cy="2" r="1.6" fill="#e81010"/><circle cx="16" cy="2" r="1.6" fill="#e81010"/><circle cx="2" cy="16" r="1.6" fill="#e81010"/><circle cx="16" cy="16" r="1.6" fill="#e81010"/></svg>
<svg class="a" style="left:1512.2px;top:83.2px" width="19.6" height="19.6" viewBox="0 0 18 18"><rect x="1.500" y="3.500" width="15" height="13" rx="2" fill="#f0f0f0" stroke="#555" stroke-width="1.200"/><path d="M4 3.500v-2h3.500v2M10.500 3.500v-2H14v2" stroke="#555" stroke-width="1.200" fill="none"/><path d="M3 7.500h3M3 10h3M3 12.500h3M12 7.500h3M12 10h3M12 12.500h3" stroke="#999" stroke-width=".8"/><circle cx="9" cy="10" r="2.800" fill="none" stroke="#555" stroke-width="2.200" stroke-dasharray="1.700 1"/><circle cx="9" cy="10" r="2" fill="none" stroke="#555" stroke-width="1.300"/></svg>
<div class="a" style="left:1536px;top:80px;width:1px;height:27px;background:#e2e2e2;"></div>
<svg class="a" style="left:1540px;top:82px;" width="4" height="22" viewBox="0 0 4 22"><path d="M2 1.500l1-1M2 5.500l1-1M2 9.500l1-1M2 13.500l1-1M2 17.500l1-1" stroke="#888" stroke-width="1.200"/><path d="M1 2.500l1-1M1 6.500l1-1M1 10.500l1-1M1 14.500l1-1M1 18.500l1-1" stroke="#c8c8c8" stroke-width="1"/></svg>
<svg class="a" style="left:1549.2px;top:83.2px" width="19.6" height="19.6" viewBox="0 0 18 18"><rect x="1.500" y="1.500" width="15" height="15" fill="#b8b8b8" stroke="#555"/><rect x="2" y="2" width="14" height="2.500" fill="#2d48c0"/><path d="M3 7h7M3 9.500h6M3 12h4M3 14.500h3" stroke="#eee" stroke-width="1.300"/><path d="M15 5.500V15H5.500z" fill="#98f098" stroke="#40a040" stroke-width=".8"/><path d="M13 10.500v2.500h-2.500z" fill="#b8b8b8" stroke="#40a040" stroke-width=".6"/></svg>
<svg class="a" style="left:1573px;top:91px;" width="8" height="5" viewBox="0 0 8 5"><path d="M0 0h7l-3.500 4z" fill="#111"/></svg>
<span class="t " style="top:84.5px;line-height:16px;height:16px;font-size:13px;color:#555;transform:scaleX(0.9550);transform-origin:0 50%;left:1588px;">»</span>
<div class="a" style="left:1px;top:107px;width:323px;height:21px;background:#d9e6f4;"></div>
<span class="t " style="top:109.5px;line-height:16px;height:16px;color:#303030;font-weight:bold;transform:scaleX(0.9563);transform-origin:0 50%;left:7px;">Navigator - Ergebnisse</span>
<svg class="a" style="left:285px;top:111px;" width="34" height="14" viewBox="0 0 34 14"><path d="M2.500 6.500h5.500v4.500H2.500zM4.500 6V3.500h5.500V8H8.500" stroke="#3a3a3a" stroke-width="1.400" fill="none"/><path d="M23.500 3.500l7 7M30.500 3.500l-7 7" stroke="#3a3a3a" stroke-width="1.700"/></svg>
<div class="a" style="left:2px;top:129px;width:322px;height:1047px;background:#c5c5d6;"></div>
<div class="a" style="left:4px;top:131px;width:318px;height:1043px;background:#f5f5f5;"></div>
<div class="a" style="left:6px;top:133px;width:282px;height:21px;background:#e6e6e6;"></div>
<svg class="a" style="left:10px;top:135px;" width="16" height="16" viewBox="0 0 16 16"><rect x=".5" y=".5" width="14" height="13" fill="#c8c8c8" stroke="#aaa"/><path d="M2 3.500h11M2 6.500h11M5 1v8M9 1v8" stroke="#eee" stroke-width="1"/><path d="M1 12.500l5-2 8 .5v2H1z" fill="#8f8f8f"/></svg>
<span class="t " style="top:136px;line-height:16px;height:16px;color:#8a8a8a;transform:scaleX(0.9289);transform-origin:0 50%;left:30px;">Statische Analyse</span>
<svg class="a" style="left:273px;top:140px;" width="11" height="7" viewBox="0 0 11 7"><path d="M1 1l4.500 4.500L10 1" stroke="#b0b0b0" stroke-width="1.100" fill="none"/></svg>
<div class="a" style="left:289px;top:133px;width:15px;height:21px;background:#d2d2d2;"></div>
<div class="a" style="left:305px;top:133px;width:15px;height:21px;background:#d2d2d2;"></div>
<svg class="a" style="left:289px;top:133px;" width="31" height="21" viewBox="0 0 31 21"><path d="M10 6.500v8l-5-4z" fill="#555"/><path d="M21.500 6.500v8l5-4z" fill="#444"/></svg>
<div class="a" style="left:4px;top:163px;width:318px;height:654px;background:#fff;"></div>
<div class="a" style="left:4px;top:822px;width:318px;height:327px;background:#fff;"></div>
<svg class="a" style="left:9px;top:170px;" width="10" height="6" viewBox="0 0 10 6"><path d="M1 1l4 4 4-4" stroke="#444" stroke-width="1.600" fill="none"/></svg>
<svg class="a" style="left:25px;top:166px;" width="13" height="13" viewBox="0 0 13 13"><rect x=".5" y=".5" width="12" height="12" fill="#fff" stroke="#333"/></svg>
<svg class="a" style="left:43px;top:165px;" width="16" height="16" viewBox="0 0 16 16"><path d="M2 3.500c-1.800 3-1.800 6.500 0 9.500M14 3.500c1.800 3 1.800 6.500 0 9.500" stroke="#a0a0a0" stroke-width=".8" fill="none"/><path d="M3.500 5c3 1.600 6 1.600 9 0" stroke="#b0b0b0" stroke-width=".7" fill="none"/><path d="M3.500 13V3.500h9V13" stroke="#111" stroke-width="1.200" fill="none"/><circle cx="3.500" cy="13.200" r="1.300" fill="#e01010"/><circle cx="12.500" cy="13.200" r="1.300" fill="#e01010"/><circle cx="3.500" cy="3.300" r="1" fill="#e01010"/><circle cx="12.500" cy="3.300" r="1" fill="#e01010"/></svg>
<span class="t " style="top:165.5px;line-height:16px;height:16px;transform:scaleX(0.9744);transform-origin:0 50%;left:64px;">Globale Verformungen</span>
<svg class="a" style="left:45px;top:184px;" width="13" height="13" viewBox="0 0 13 13"><circle cx="6.500" cy="6.500" r="6" fill="#fff" stroke="#333"/><circle cx="6.500" cy="6.500" r="3" fill="#333"/></svg>
<svg class="a" style="left:63px;top:183px;" width="16" height="16" viewBox="0 0 16 16"><path d="M2 3.500c-1.800 3-1.800 6.500 0 9.500M14 3.500c1.800 3 1.800 6.500 0 9.500" stroke="#a0a0a0" stroke-width=".8" fill="none"/><path d="M3.500 5c3 1.600 6 1.600 9 0" stroke="#b0b0b0" stroke-width=".7" fill="none"/><path d="M3.500 13V3.500h9V13" stroke="#111" stroke-width="1.200" fill="none"/><circle cx="3.500" cy="13.200" r="1.300" fill="#e01010"/><circle cx="12.500" cy="13.200" r="1.300" fill="#e01010"/><circle cx="3.500" cy="3.300" r="1" fill="#e01010"/><circle cx="12.500" cy="3.300" r="1" fill="#e01010"/></svg>
<span class="t " style="top:183.5px;line-height:16px;height:16px;transform:scaleX(0.9550);transform-origin:0 50%;left:84px;">|u|</span>
<svg class="a" style="left:45px;top:202px;" width="13" height="13" viewBox="0 0 13 13"><circle cx="6.500" cy="6.500" r="6" fill="#fff" stroke="#333"/></svg>
<svg class="a" style="left:63px;top:201px;" width="16" height="16" viewBox="0 0 16 16"><path d="M2 3.500c-1.800 3-1.800 6.500 0 9.500M14 3.500c1.800 3 1.800 6.500 0 9.500" stroke="#a0a0a0" stroke-width=".8" fill="none"/><path d="M3.500 5c3 1.600 6 1.600 9 0" stroke="#b0b0b0" stroke-width=".7" fill="none"/><path d="M3.500 13V3.500h9V13" stroke="#111" stroke-width="1.200" fill="none"/><circle cx="3.500" cy="13.200" r="1.300" fill="#e01010"/><circle cx="12.500" cy="13.200" r="1.300" fill="#e01010"/><circle cx="3.500" cy="3.300" r="1" fill="#e01010"/><circle cx="12.500" cy="3.300" r="1" fill="#e01010"/></svg>
<span class="t " style="top:201.5px;line-height:16px;height:16px;transform:scaleX(0.9550);transform-origin:0 50%;left:84px;">u<span class="sb">X</span></span>
<svg class="a" style="left:45px;top:220px;" width="13" height="13" viewBox="0 0 13 13"><circle cx="6.500" cy="6.500" r="6" fill="#fff" stroke="#333"/></svg>
<svg class="a" style="left:63px;top:219px;" width="16" height="16" viewBox="0 0 16 16"><path d="M2 3.500c-1.800 3-1.800 6.500 0 9.500M14 3.500c1.800 3 1.800 6.500 0 9.500" stroke="#a0a0a0" stroke-width=".8" fill="none"/><path d="M3.500 5c3 1.600 6 1.600 9 0" stroke="#b0b0b0" stroke-width=".7" fill="none"/><path d="M3.500 13V3.500h9V13" stroke="#111" stroke-width="1.200" fill="none"/><circle cx="3.500" cy="13.200" r="1.300" fill="#e01010"/><circle cx="12.500" cy="13.200" r="1.300" fill="#e01010"/><circle cx="3.500" cy="3.300" r="1" fill="#e01010"/><circle cx="12.500" cy="3.300" r="1" fill="#e01010"/></svg>
<span class="t " style="top:219.5px;line-height:16px;height:16px;transform:scaleX(0.9550);transform-origin:0 50%;left:84px;">u<span class="sb">Y</span></span>
<svg class="a" style="left:45px;top:238px;" width="13" height="13" viewBox="0 0 13 13"><circle cx="6.500" cy="6.500" r="6" fill="#fff" stroke="#333"/></svg>
<svg class="a" style="left:63px;top:237px;" width="16" height="16" viewBox="0 0 16 16"><path d="M2 3.500c-1.800 3-1.800 6.500 0 9.500M14 3.500c1.800 3 1.800 6.500 0 9.500" stroke="#a0a0a0" stroke-width=".8" fill="none"/><path d="M3.500 5c3 1.600 6 1.600 9 0" stroke="#b0b0b0" stroke-width=".7" fill="none"/><path d="M3.500 13V3.500h9V13" stroke="#111" stroke-width="1.200" fill="none"/><circle cx="3.500" cy="13.200" r="1.300" fill="#e01010"/><circle cx="12.500" cy="13.200" r="1.300" fill="#e01010"/><circle cx="3.500" cy="3.300" r="1" fill="#e01010"/><circle cx="12.500" cy="3.300" r="1" fill="#e01010"/></svg>
<span class="t " style="top:237.5px;line-height:16px;height:16px;transform:scaleX(0.9550);transform-origin:0 50%;left:84px;">u<span class="sb">Z</span></span>
<svg class="a" style="left:45px;top:256px;" width="13" height="13" viewBox="0 0 13 13"><circle cx="6.500" cy="6.500" r="6" fill="#fff" stroke="#333"/></svg>
<svg class="a" style="left:63px;top:255px;" width="16" height="16" viewBox="0 0 16 16"><path d="M2 3.500c-1.800 3-1.800 6.500 0 9.500M14 3.500c1.800 3 1.800 6.500 0 9.500" stroke="#a0a0a0" stroke-width=".8" fill="none"/><path d="M3.500 5c3 1.600 6 1.600 9 0" stroke="#b0b0b0" stroke-width=".7" fill="none"/><path d="M3.500 13V3.500h9V13" stroke="#111" stroke-width="1.200" fill="none"/><circle cx="3.500" cy="13.200" r="1.300" fill="#e01010"/><circle cx="12.500" cy="13.200" r="1.300" fill="#e01010"/><circle cx="3.500" cy="3.300" r="1" fill="#e01010"/><circle cx="12.500" cy="3.300" r="1" fill="#e01010"/></svg>
<span class="t " style="top:255.5px;line-height:16px;height:16px;transform:scaleX(0.9550);transform-origin:0 50%;left:84px;">φ<span class="sb">X</span></span>
<svg class="a" style="left:45px;top:274px;" width="13" height="13" viewBox="0 0 13 13"><circle cx="6.500" cy="6.500" r="6" fill="#fff" stroke="#333"/></svg>
<svg class="a" style="left:63px;top:273px;" width="16" height="16" viewBox="0 0 16 16"><path d="M2 3.500c-1.800 3-1.800 6.500 0 9.500M14 3.500c1.800 3 1.800 6.500 0 9.500" stroke="#a0a0a0" stroke-width=".8" fill="none"/><path d="M3.500 5c3 1.600 6 1.600 9 0" stroke="#b0b0b0" stroke-width=".7" fill="none"/><path d="M3.500 13V3.500h9V13" stroke="#111" stroke-width="1.200" fill="none"/><circle cx="3.500" cy="13.200" r="1.300" fill="#e01010"/><circle cx="12.500" cy="13.200" r="1.300" fill="#e01010"/><circle cx="3.500" cy="3.300" r="1" fill="#e01010"/><circle cx="12.500" cy="3.300" r="1" fill="#e01010"/></svg>
<span class="t " style="top:273.5px;line-height:16px;height:16px;transform:scaleX(0.9550);transform-origin:0 50%;left:84px;">φ<span class="sb">Y</span></span>
<svg class="a" style="left:45px;top:292px;" width="13" height="13" viewBox="0 0 13 13"><circle cx="6.500" cy="6.500" r="6" fill="#fff" stroke="#333"/></svg>
<svg class="a" style="left:63px;top:291px;" width="16" height="16" viewBox="0 0 16 16"><path d="M2 3.500c-1.800 3-1.800 6.500 0 9.500M14 3.500c1.800 3 1.800 6.500 0 9.500" stroke="#a0a0a0" stroke-width=".8" fill="none"/><path d="M3.500 5c3 1.600 6 1.600 9 0" stroke="#b0b0b0" stroke-width=".7" fill="none"/><path d="M3.500 13V3.500h9V13" stroke="#111" stroke-width="1.200" fill="none"/><circle cx="3.500" cy="13.200" r="1.300" fill="#e01010"/><circle cx="12.500" cy="13.200" r="1.300" fill="#e01010"/><circle cx="3.500" cy="3.300" r="1" fill="#e01010"/><circle cx="12.500" cy="3.300" r="1" fill="#e01010"/></svg>
<span class="t " style="top:291.5px;line-height:16px;height:16px;transform:scaleX(0.9550);transform-origin:0 50%;left:84px;">φ<span class="sb">Z</span></span>
<svg class="a" style="left:9px;top:314px;" width="10" height="6" viewBox="0 0 10 6"><path d="M1 1l4 4 4-4" stroke="#444" stroke-width="1.600" fill="none"/></svg>
<svg class="a" style="left:25px;top:310px;" width="13" height="13" viewBox="0 0 13 13"><rect x=".5" y=".5" width="12" height="12" fill="#fff" stroke="#333"/><path d="M2.500 6.500l3 3 5.500-6" stroke="#333" stroke-width="1.300" fill="none"/></svg>
<svg class="a" style="left:43px;top:310px;" width="16" height="16" viewBox="0 0 16 16"><path d="M4 8.500a4 5.500 0 0 0 8 0z" fill="#c8c8ff" stroke="#2a2aff" stroke-width="1"/><path d="M1 8.500l1.200-.5L3 1.500l1.500 6.500M15 8.500l-1.200-.5L13 1.500 11.500 8" stroke="#ff1010" stroke-width="1.200" fill="none"/><path d="M2 8.500h12" stroke="#8099c4" stroke-width="1.600"/></svg>
<span class="t " style="top:309.5px;line-height:16px;height:16px;transform:scaleX(0.8929);transform-origin:0 50%;left:64px;">Stäbe</span>
<svg class="a" style="left:29px;top:332px;" width="10" height="6" viewBox="0 0 10 6"><path d="M1 1l4 4 4-4" stroke="#444" stroke-width="1.600" fill="none"/></svg>
<svg class="a" style="left:45px;top:328px;" width="13" height="13" viewBox="0 0 13 13"><rect x=".5" y=".5" width="12" height="12" fill="#cce4f7" stroke="#0f5fa8"/></svg>
<svg class="a" style="left:63px;top:328px;" width="16" height="16" viewBox="0 0 16 16"><path d="M4 8.500a4 5.500 0 0 0 8 0z" fill="#c8c8ff" stroke="#2a2aff" stroke-width="1"/><path d="M1 8.500l1.200-.5L3 1.500l1.500 6.500M15 8.500l-1.200-.5L13 1.500 11.500 8" stroke="#ff1010" stroke-width="1.200" fill="none"/><path d="M2 8.500h12" stroke="#8099c4" stroke-width="1.600"/></svg>
<span class="t " style="top:327.5px;line-height:16px;height:16px;transform:scaleX(0.9643);transform-origin:0 50%;left:84px;">Lokale Verformungen</span>
<svg class="a" style="left:65px;top:346px;" width="13" height="13" viewBox="0 0 13 13"><circle cx="6.500" cy="6.500" r="6" fill="#fff" stroke="#333"/></svg>
<svg class="a" style="left:83px;top:346px;" width="16" height="16" viewBox="0 0 16 16"><path d="M4 8.500a4 5.500 0 0 0 8 0z" fill="#c8c8ff" stroke="#2a2aff" stroke-width="1"/><path d="M1 8.500l1.200-.5L3 1.500l1.500 6.500M15 8.500l-1.200-.5L13 1.500 11.500 8" stroke="#ff1010" stroke-width="1.200" fill="none"/><path d="M2 8.500h12" stroke="#8099c4" stroke-width="1.600"/></svg>
<span class="t " style="top:345.5px;line-height:16px;height:16px;transform:scaleX(0.9550);transform-origin:0 50%;left:104px;">u<span class="sb">x</span></span>
<svg class="a" style="left:65px;top:364px;" width="13" height="13" viewBox="0 0 13 13"><circle cx="6.500" cy="6.500" r="6" fill="#fff" stroke="#333"/></svg>
<svg class="a" style="left:83px;top:364px;" width="16" height="16" viewBox="0 0 16 16"><path d="M4 8.500a4 5.500 0 0 0 8 0z" fill="#c8c8ff" stroke="#2a2aff" stroke-width="1"/><path d="M1 8.500l1.200-.5L3 1.500l1.500 6.500M15 8.500l-1.200-.5L13 1.500 11.500 8" stroke="#ff1010" stroke-width="1.200" fill="none"/><path d="M2 8.500h12" stroke="#8099c4" stroke-width="1.600"/></svg>
<span class="t " style="top:363.5px;line-height:16px;height:16px;transform:scaleX(0.9550);transform-origin:0 50%;left:104px;">u<span class="sb">y</span></span>
<svg class="a" style="left:65px;top:382px;" width="13" height="13" viewBox="0 0 13 13"><circle cx="6.500" cy="6.500" r="6" fill="#fff" stroke="#333"/></svg>
<svg class="a" style="left:83px;top:382px;" width="16" height="16" viewBox="0 0 16 16"><path d="M4 8.500a4 5.500 0 0 0 8 0z" fill="#c8c8ff" stroke="#2a2aff" stroke-width="1"/><path d="M1 8.500l1.200-.5L3 1.500l1.500 6.500M15 8.500l-1.200-.5L13 1.500 11.500 8" stroke="#ff1010" stroke-width="1.200" fill="none"/><path d="M2 8.500h12" stroke="#8099c4" stroke-width="1.600"/></svg>
<span class="t " style="top:381.5px;line-height:16px;height:16px;transform:scaleX(0.9550);transform-origin:0 50%;left:104px;">u<span class="sb">z</span></span>
<svg class="a" style="left:65px;top:400px;" width="13" height="13" viewBox="0 0 13 13"><circle cx="6.500" cy="6.500" r="6" fill="#fff" stroke="#333"/></svg>
<svg class="a" style="left:83px;top:400px;" width="16" height="16" viewBox="0 0 16 16"><path d="M4 8.500a4 5.500 0 0 0 8 0z" fill="#c8c8ff" stroke="#2a2aff" stroke-width="1"/><path d="M1 8.500l1.200-.5L3 1.500l1.500 6.500M15 8.500l-1.200-.5L13 1.500 11.500 8" stroke="#ff1010" stroke-width="1.200" fill="none"/><path d="M2 8.500h12" stroke="#8099c4" stroke-width="1.600"/></svg>
<span class="t " style="top:399.5px;line-height:16px;height:16px;transform:scaleX(0.9550);transform-origin:0 50%;left:104px;">φ<span class="sb">x</span></span>
<svg class="a" style="left:65px;top:418px;" width="13" height="13" viewBox="0 0 13 13"><circle cx="6.500" cy="6.500" r="6" fill="#fff" stroke="#333"/></svg>
<svg class="a" style="left:83px;top:418px;" width="16" height="16" viewBox="0 0 16 16"><path d="M4 8.500a4 5.500 0 0 0 8 0z" fill="#c8c8ff" stroke="#2a2aff" stroke-width="1"/><path d="M1 8.500l1.200-.5L3 1.500l1.500 6.500M15 8.500l-1.200-.5L13 1.500 11.500 8" stroke="#ff1010" stroke-width="1.200" fill="none"/><path d="M2 8.500h12" stroke="#8099c4" stroke-width="1.600"/></svg>
<span class="t " style="top:417.5px;line-height:16px;height:16px;transform:scaleX(0.9550);transform-origin:0 50%;left:104px;">φ<span class="sb">y</span></span>
<svg class="a" style="left:65px;top:436px;" width="13" height="13" viewBox="0 0 13 13"><circle cx="6.500" cy="6.500" r="6" fill="#fff" stroke="#333"/></svg>
<svg class="a" style="left:83px;top:436px;" width="16" height="16" viewBox="0 0 16 16"><path d="M4 8.500a4 5.500 0 0 0 8 0z" fill="#c8c8ff" stroke="#2a2aff" stroke-width="1"/><path d="M1 8.500l1.200-.5L3 1.500l1.500 6.500M15 8.500l-1.200-.5L13 1.500 11.500 8" stroke="#ff1010" stroke-width="1.200" fill="none"/><path d="M2 8.500h12" stroke="#8099c4" stroke-width="1.600"/></svg>
<span class="t " style="top:435.5px;line-height:16px;height:16px;transform:scaleX(0.9550);transform-origin:0 50%;left:104px;">φ<span class="sb">z</span></span>
<svg class="a" style="left:65px;top:454px;" width="13" height="13" viewBox="0 0 13 13"><circle cx="6.500" cy="6.500" r="6" fill="#fff" stroke="#333"/></svg>
<svg class="a" style="left:83px;top:454px;" width="16" height="16" viewBox="0 0 16 16"><path d="M4 8.500a4 5.500 0 0 0 8 0z" fill="#c8c8ff" stroke="#2a2aff" stroke-width="1"/><path d="M1 8.500l1.200-.5L3 1.500l1.500 6.500M15 8.500l-1.200-.5L13 1.500 11.500 8" stroke="#ff1010" stroke-width="1.200" fill="none"/><path d="M2 8.500h12" stroke="#8099c4" stroke-width="1.600"/></svg>
<span class="t " style="top:453.5px;line-height:16px;height:16px;transform:scaleX(0.9550);transform-origin:0 50%;left:104px;">ω</span>
<svg class="a" style="left:29px;top:476px;" width="10" height="6" viewBox="0 0 10 6"><path d="M1 1l4 4 4-4" stroke="#444" stroke-width="1.600" fill="none"/></svg>
<svg class="a" style="left:45px;top:472px;" width="13" height="13" viewBox="0 0 13 13"><rect x=".5" y=".5" width="12" height="12" fill="#cce4f7" stroke="#0f5fa8"/></svg>
<svg class="a" style="left:63px;top:472px;" width="16" height="16" viewBox="0 0 16 16"><path d="M4 8.500a4 5.500 0 0 0 8 0z" fill="#c8c8ff" stroke="#2a2aff" stroke-width="1"/><path d="M1 8.500l1.200-.5L3 1.500l1.500 6.500M15 8.500l-1.200-.5L13 1.500 11.500 8" stroke="#ff1010" stroke-width="1.200" fill="none"/><path d="M2 8.500h12" stroke="#8099c4" stroke-width="1.600"/></svg>
<span class="t " style="top:471.5px;line-height:16px;height:16px;transform:scaleX(0.9770);transform-origin:0 50%;left:84px;">Schnittgrößen</span>
<svg class="a" style="left:65px;top:490px;" width="13" height="13" viewBox="0 0 13 13"><circle cx="6.500" cy="6.500" r="6" fill="#fff" stroke="#333"/></svg>
<svg class="a" style="left:83px;top:490px;" width="16" height="16" viewBox="0 0 16 16"><path d="M4 8.500a4 5.500 0 0 0 8 0z" fill="#c8c8ff" stroke="#2a2aff" stroke-width="1"/><path d="M1 8.500l1.200-.5L3 1.500l1.500 6.500M15 8.500l-1.200-.5L13 1.500 11.500 8" stroke="#ff1010" stroke-width="1.200" fill="none"/><path d="M2 8.500h12" stroke="#8099c4" stroke-width="1.600"/></svg>
<span class="t " style="top:489.5px;line-height:16px;height:16px;transform:scaleX(0.9550);transform-origin:0 50%;left:104px;">N</span>
<svg class="a" style="left:65px;top:508px;" width="13" height="13" viewBox="0 0 13 13"><circle cx="6.500" cy="6.500" r="6" fill="#fff" stroke="#333"/></svg>
<svg class="a" style="left:83px;top:508px;" width="16" height="16" viewBox="0 0 16 16"><path d="M4 8.500a4 5.500 0 0 0 8 0z" fill="#c8c8ff" stroke="#2a2aff" stroke-width="1"/><path d="M1 8.500l1.200-.5L3 1.500l1.500 6.500M15 8.500l-1.200-.5L13 1.500 11.500 8" stroke="#ff1010" stroke-width="1.200" fill="none"/><path d="M2 8.500h12" stroke="#8099c4" stroke-width="1.600"/></svg>
<span class="t " style="top:507.5px;line-height:16px;height:16px;transform:scaleX(0.9550);transform-origin:0 50%;left:104px;">V<span class="sb">y</span></span>
<svg class="a" style="left:65px;top:526px;" width="13" height="13" viewBox="0 0 13 13"><circle cx="6.500" cy="6.500" r="6" fill="#fff" stroke="#333"/></svg>
<svg class="a" style="left:83px;top:526px;" width="16" height="16" viewBox="0 0 16 16"><path d="M4 8.500a4 5.500 0 0 0 8 0z" fill="#c8c8ff" stroke="#2a2aff" stroke-width="1"/><path d="M1 8.500l1.200-.5L3 1.500l1.500 6.500M15 8.500l-1.200-.5L13 1.500 11.500 8" stroke="#ff1010" stroke-width="1.200" fill="none"/><path d="M2 8.500h12" stroke="#8099c4" stroke-width="1.600"/></svg>
<span class="t " style="top:525.5px;line-height:16px;height:16px;transform:scaleX(0.9550);transform-origin:0 50%;left:104px;">V<span class="sb">z</span></span>
<svg class="a" style="left:65px;top:544px;" width="13" height="13" viewBox="0 0 13 13"><circle cx="6.500" cy="6.500" r="6" fill="#fff" stroke="#333"/></svg>
<svg class="a" style="left:83px;top:544px;" width="16" height="16" viewBox="0 0 16 16"><path d="M4 8.500a4 5.500 0 0 0 8 0z" fill="#c8c8ff" stroke="#2a2aff" stroke-width="1"/><path d="M1 8.500l1.200-.5L3 1.500l1.500 6.500M15 8.500l-1.200-.5L13 1.500 11.500 8" stroke="#ff1010" stroke-width="1.200" fill="none"/><path d="M2 8.500h12" stroke="#8099c4" stroke-width="1.600"/></svg>
<span class="t " style="top:543.5px;line-height:16px;height:16px;transform:scaleX(0.9550);transform-origin:0 50%;left:104px;">M<span class="sb">T</span></span>
<svg class="a" style="left:65px;top:562px;" width="13" height="13" viewBox="0 0 13 13"><circle cx="6.500" cy="6.500" r="6" fill="#fff" stroke="#333"/></svg>
<svg class="a" style="left:83px;top:562px;" width="16" height="16" viewBox="0 0 16 16"><path d="M4 8.500a4 5.500 0 0 0 8 0z" fill="#c8c8ff" stroke="#2a2aff" stroke-width="1"/><path d="M1 8.500l1.200-.5L3 1.500l1.500 6.500M15 8.500l-1.200-.5L13 1.500 11.500 8" stroke="#ff1010" stroke-width="1.200" fill="none"/><path d="M2 8.500h12" stroke="#8099c4" stroke-width="1.600"/></svg>
<span class="t " style="top:561.5px;line-height:16px;height:16px;transform:scaleX(0.9550);transform-origin:0 50%;left:104px;">M<span class="sb">y</span></span>
<svg class="a" style="left:65px;top:580px;" width="13" height="13" viewBox="0 0 13 13"><circle cx="6.500" cy="6.500" r="6" fill="#fff" stroke="#333"/></svg>
<svg class="a" style="left:83px;top:580px;" width="16" height="16" viewBox="0 0 16 16"><path d="M4 8.500a4 5.500 0 0 0 8 0z" fill="#c8c8ff" stroke="#2a2aff" stroke-width="1"/><path d="M1 8.500l1.200-.5L3 1.500l1.500 6.500M15 8.500l-1.200-.5L13 1.500 11.500 8" stroke="#ff1010" stroke-width="1.200" fill="none"/><path d="M2 8.500h12" stroke="#8099c4" stroke-width="1.600"/></svg>
<span class="t " style="top:579.5px;line-height:16px;height:16px;transform:scaleX(0.9550);transform-origin:0 50%;left:104px;">M<span class="sb">z</span></span>
<div class="a" style="left:80px;top:596px;width:242px;height:18px;background:#cce4f7;"></div>
<svg class="a" style="left:65px;top:598px;" width="13" height="13" viewBox="0 0 13 13"><circle cx="6.500" cy="6.500" r="6" fill="#fff" stroke="#333"/><circle cx="6.500" cy="6.500" r="3" fill="#333"/></svg>
<svg class="a" style="left:83px;top:598px;" width="16" height="16" viewBox="0 0 16 16"><path d="M4 8.500a4 5.500 0 0 0 8 0z" fill="#5a8ee8" stroke="#2a2aff" stroke-width="1"/><path d="M1 8.500l1.200-.5L3 1.500l1.500 6.500M15 8.500l-1.200-.5L13 1.500 11.500 8" stroke="#ff1010" stroke-width="1.200" fill="none"/><path d="M2 8.500h12" stroke="#8099c4" stroke-width="1.600"/></svg>
<span class="t " style="top:597.5px;line-height:16px;height:16px;transform:scaleX(0.9550);transform-origin:0 50%;left:104px;">M<span class="sb">ω</span></span>
<svg class="a" style="left:65px;top:616px;" width="13" height="13" viewBox="0 0 13 13"><circle cx="6.500" cy="6.500" r="6" fill="#fff" stroke="#333"/></svg>
<svg class="a" style="left:83px;top:616px;" width="16" height="16" viewBox="0 0 16 16"><path d="M4 8.500a4 5.500 0 0 0 8 0z" fill="#c8c8ff" stroke="#2a2aff" stroke-width="1"/><path d="M1 8.500l1.200-.5L3 1.500l1.500 6.500M15 8.500l-1.200-.5L13 1.500 11.500 8" stroke="#ff1010" stroke-width="1.200" fill="none"/><path d="M2 8.500h12" stroke="#8099c4" stroke-width="1.600"/></svg>
<span class="t " style="top:615.5px;line-height:16px;height:16px;transform:scaleX(0.9550);transform-origin:0 50%;left:104px;">M<span class="sb">T,pri</span></span>
<svg class="a" style="left:65px;top:634px;" width="13" height="13" viewBox="0 0 13 13"><circle cx="6.500" cy="6.500" r="6" fill="#fff" stroke="#333"/></svg>
<svg class="a" style="left:83px;top:634px;" width="16" height="16" viewBox="0 0 16 16"><path d="M4 8.500a4 5.500 0 0 0 8 0z" fill="#c8c8ff" stroke="#2a2aff" stroke-width="1"/><path d="M1 8.500l1.200-.5L3 1.500l1.500 6.500M15 8.500l-1.200-.5L13 1.500 11.500 8" stroke="#ff1010" stroke-width="1.200" fill="none"/><path d="M2 8.500h12" stroke="#8099c4" stroke-width="1.600"/></svg>
<span class="t " style="top:633.5px;line-height:16px;height:16px;transform:scaleX(0.9550);transform-origin:0 50%;left:104px;">M<span class="sb">T,sec</span></span>
<svg class="a" style="left:31.5px;top:654px;" width="6" height="10" viewBox="0 0 6 10"><path d="M1 1l4 4-4 4" stroke="#8a8a8a" stroke-width="1.500" fill="none"/></svg>
<svg class="a" style="left:45px;top:652px;" width="13" height="13" viewBox="0 0 13 13"><rect x=".5" y=".5" width="12" height="12" fill="#cce4f7" stroke="#0f5fa8"/></svg>
<svg class="a" style="left:63px;top:652px;" width="16" height="16" viewBox="0 0 16 16"><path d="M4 8.500a4 5.500 0 0 0 8 0z" fill="#c8c8ff" stroke="#2a2aff" stroke-width="1"/><path d="M1 8.500l1.200-.5L3 1.500l1.500 6.500M15 8.500l-1.200-.5L13 1.500 11.500 8" stroke="#ff1010" stroke-width="1.200" fill="none"/><path d="M2 8.500h12" stroke="#8099c4" stroke-width="1.600"/></svg>
<span class="t " style="top:651.5px;line-height:16px;height:16px;transform:scaleX(0.9990);transform-origin:0 50%;left:84px;">Dehnungen</span>
<svg class="a" style="left:31.5px;top:672px;" width="6" height="10" viewBox="0 0 6 10"><path d="M1 1l4 4-4 4" stroke="#8a8a8a" stroke-width="1.500" fill="none"/></svg>
<svg class="a" style="left:45px;top:670px;" width="13" height="13" viewBox="0 0 13 13"><rect x=".5" y=".5" width="12" height="12" fill="#cce4f7" stroke="#0f5fa8"/></svg>
<svg class="a" style="left:63px;top:670px;" width="16" height="16" viewBox="0 0 16 16"><path d="M4 8.500a4 5.500 0 0 0 8 0z" fill="#c8c8ff" stroke="#2a2aff" stroke-width="1"/><path d="M1 8.500l1.200-.5L3 1.500l1.500 6.500M15 8.500l-1.200-.5L13 1.500 11.500 8" stroke="#ff1010" stroke-width="1.200" fill="none"/><path d="M2 8.500h12" stroke="#8099c4" stroke-width="1.600"/></svg>
<span class="t " style="top:669.5px;line-height:16px;height:16px;transform:scaleX(0.9842);transform-origin:0 50%;left:84px;">Spannungen</span>
<svg class="a" style="left:11.5px;top:690px;" width="6" height="10" viewBox="0 0 6 10"><path d="M1 1l4 4-4 4" stroke="#8a8a8a" stroke-width="1.500" fill="none"/></svg>
<svg class="a" style="left:25px;top:688px;" width="13" height="13" viewBox="0 0 13 13"><rect x=".5" y=".5" width="12" height="12" fill="#fff" stroke="#333"/></svg>
<svg class="a" style="left:44px;top:687px;" width="16" height="16" viewBox="0 0 16 16"><path d="M5 16V11.500H2.500L5 8V5.500h2V8l2.500 3.500H7V16z" fill="#1fa53a"/><circle cx="6" cy="4" r="2.200" fill="#2a7a3a"/><path d="M15.500 3.500h-4M13 1.500l-2 2 2 2" stroke="#2aa84a" stroke-width="1.400" fill="none"/></svg>
<span class="t " style="top:687.5px;line-height:16px;height:16px;transform:scaleX(0.9685);transform-origin:0 50%;left:64px;">Lagerreaktionen</span>
<svg class="a" style="left:11.5px;top:826px;" width="6" height="10" viewBox="0 0 6 10"><path d="M1 1l4 4-4 4" stroke="#8a8a8a" stroke-width="1.500" fill="none"/></svg>
<svg class="a" style="left:25px;top:824px;" width="13" height="13" viewBox="0 0 13 13"><rect x=".5" y=".5" width="12" height="12" fill="#fff" stroke="#333"/><path d="M2.500 6.500l3 3 5.500-6" stroke="#333" stroke-width="1.300" fill="none"/></svg>
<svg class="a" style="left:43px;top:822px;" width="16" height="16" viewBox="0 0 16 16"><path d="M0 11v3.300L7.200 11z" fill="#1e3fae"/><path d="M9.500 10L16 6.700V10z" fill="#d62a1e"/><path d="M0 10.700L16 10" stroke="#222" stroke-width="1.300"/><text x=".5" y="6" font-size="7.500" font-weight="bold" fill="#222" letter-spacing=".5">x.xx</text></svg>
<span class="t " style="top:823.5px;line-height:16px;height:16px;transform:scaleX(0.9776);transform-origin:0 50%;left:64px;">Ergebniswerte</span>
<svg class="a" style="left:25px;top:842px;" width="13" height="13" viewBox="0 0 13 13"><rect x=".5" y=".5" width="12" height="12" fill="#fff" stroke="#333"/><path d="M2.500 6.500l3 3 5.500-6" stroke="#333" stroke-width="1.300" fill="none"/></svg>
<svg class="a" style="left:43px;top:840px;" width="16" height="16" viewBox="0 0 16 16"><path d="M0 11v3.300L7.200 11z" fill="#1e3fae"/><path d="M9.500 10L16 6.700V10z" fill="#d62a1e"/><path d="M0 10.700L16 10" stroke="#222" stroke-width="1.300"/><ellipse cx="11" cy="4.500" rx="4.300" ry="3" fill="#dfe6f8" stroke="#3d3478" stroke-width="1"/><circle cx="11" cy="4.500" r="2.200" fill="#3e5cc0"/><circle cx="11" cy="4.500" r="1" fill="#0a0a20"/></svg>
<span class="t " style="top:841.5px;line-height:16px;height:16px;transform:scaleX(1.0112);transform-origin:0 50%;left:64px;">Titelinformationen</span>
<svg class="a" style="left:25px;top:860px;" width="13" height="13" viewBox="0 0 13 13"><rect x=".5" y=".5" width="12" height="12" fill="#fff" stroke="#333"/><path d="M2.500 6.500l3 3 5.500-6" stroke="#333" stroke-width="1.300" fill="none"/></svg>
<svg class="a" style="left:43px;top:858px;" width="16" height="16" viewBox="0 0 16 16"><path d="M0 11v3.300L7.200 11z" fill="#1e3fae"/><path d="M9.500 10L16 6.700V10z" fill="#d62a1e"/><path d="M0 10.700L16 10" stroke="#222" stroke-width="1.300"/><ellipse cx="11" cy="4.500" rx="4.300" ry="3" fill="#dfe6f8" stroke="#3d3478" stroke-width="1"/><circle cx="11" cy="4.500" r="2.200" fill="#3e5cc0"/><circle cx="11" cy="4.500" r="1" fill="#0a0a20"/></svg>
<span class="t " style="top:859.5px;line-height:16px;height:16px;transform:scaleX(1.0023);transform-origin:0 50%;left:64px;">Max/Min-Informationen</span>
<svg class="a" style="left:11.5px;top:880px;" width="6" height="10" viewBox="0 0 6 10"><path d="M1 1l4 4-4 4" stroke="#8a8a8a" stroke-width="1.500" fill="none"/></svg>
<svg class="a" style="left:25px;top:878px;" width="13" height="13" viewBox="0 0 13 13"><rect x=".5" y=".5" width="12" height="12" fill="#cce4f7" stroke="#0f5fa8"/></svg>
<svg class="a" style="left:43px;top:876px;" width="16" height="16" viewBox="0 0 16 16"><path d="M0 11v3.300L7.200 11z" fill="#1e3fae"/><path d="M9.500 10L16 6.700V10z" fill="#d62a1e"/><path d="M0 10.700L16 10" stroke="#222" stroke-width="1.300"/><ellipse cx="11" cy="4.500" rx="4.300" ry="3" fill="#dfe6f8" stroke="#3d3478" stroke-width="1"/><circle cx="11" cy="4.500" r="2.200" fill="#3e5cc0"/><circle cx="11" cy="4.500" r="1" fill="#0a0a20"/></svg>
<span class="t " style="top:877.5px;line-height:16px;height:16px;transform:scaleX(0.9831);transform-origin:0 50%;left:64px;">Verformung</span>
<svg class="a" style="left:11.5px;top:898px;" width="6" height="10" viewBox="0 0 6 10"><path d="M1 1l4 4-4 4" stroke="#8a8a8a" stroke-width="1.500" fill="none"/></svg>
<svg class="a" style="left:25px;top:896px;" width="13" height="13" viewBox="0 0 13 13"><rect x=".5" y=".5" width="12" height="12" fill="#cce4f7" stroke="#0f5fa8"/></svg>
<svg class="a" style="left:43px;top:894px;" width="16" height="16" viewBox="0 0 16 16"><path d="M0 11v3.300L7.200 11z" fill="#1e3fae"/><path d="M9.500 10L16 6.700V10z" fill="#d62a1e"/><path d="M0 10.700L16 10" stroke="#222" stroke-width="1.300"/><ellipse cx="11" cy="4.500" rx="4.300" ry="3" fill="#dfe6f8" stroke="#3d3478" stroke-width="1"/><circle cx="11" cy="4.500" r="2.200" fill="#3e5cc0"/><circle cx="11" cy="4.500" r="1" fill="#0a0a20"/></svg>
<span class="t " style="top:895.5px;line-height:16px;height:16px;transform:scaleX(0.9678);transform-origin:0 50%;left:64px;">Linien</span>
<svg class="a" style="left:11.5px;top:916px;" width="6" height="10" viewBox="0 0 6 10"><path d="M1 1l4 4-4 4" stroke="#8a8a8a" stroke-width="1.500" fill="none"/></svg>
<svg class="a" style="left:25px;top:914px;" width="13" height="13" viewBox="0 0 13 13"><rect x=".5" y=".5" width="12" height="12" fill="#cce4f7" stroke="#0f5fa8"/></svg>
<svg class="a" style="left:43px;top:912px;" width="16" height="16" viewBox="0 0 16 16"><path d="M0 11v3.300L7.200 11z" fill="#1e3fae"/><path d="M9.500 10L16 6.700V10z" fill="#d62a1e"/><path d="M0 10.700L16 10" stroke="#222" stroke-width="1.300"/><ellipse cx="11" cy="4.500" rx="4.300" ry="3" fill="#dfe6f8" stroke="#3d3478" stroke-width="1"/><circle cx="11" cy="4.500" r="2.200" fill="#3e5cc0"/><circle cx="11" cy="4.500" r="1" fill="#0a0a20"/></svg>
<span class="t " style="top:913.5px;line-height:16px;height:16px;transform:scaleX(0.8929);transform-origin:0 50%;left:64px;">Stäbe</span>
<svg class="a" style="left:11.5px;top:934px;" width="6" height="10" viewBox="0 0 6 10"><path d="M1 1l4 4-4 4" stroke="#8a8a8a" stroke-width="1.500" fill="none"/></svg>
<svg class="a" style="left:25px;top:932px;" width="13" height="13" viewBox="0 0 13 13"><rect x=".5" y=".5" width="12" height="12" fill="#cce4f7" stroke="#0f5fa8"/></svg>
<svg class="a" style="left:43px;top:930px;" width="16" height="16" viewBox="0 0 16 16"><path d="M0 11v3.300L7.200 11z" fill="#1e3fae"/><path d="M9.500 10L16 6.700V10z" fill="#d62a1e"/><path d="M0 10.700L16 10" stroke="#222" stroke-width="1.300"/><ellipse cx="11" cy="4.500" rx="4.300" ry="3" fill="#dfe6f8" stroke="#3d3478" stroke-width="1"/><circle cx="11" cy="4.500" r="2.200" fill="#3e5cc0"/><circle cx="11" cy="4.500" r="1" fill="#0a0a20"/></svg>
<span class="t " style="top:931.5px;line-height:16px;height:16px;transform:scaleX(0.9367);transform-origin:0 50%;left:64px;">Flächen</span>
<svg class="a" style="left:11.5px;top:952px;" width="6" height="10" viewBox="0 0 6 10"><path d="M1 1l4 4-4 4" stroke="#8a8a8a" stroke-width="1.500" fill="none"/></svg>
<svg class="a" style="left:25px;top:950px;" width="13" height="13" viewBox="0 0 13 13"><rect x=".5" y=".5" width="12" height="12" fill="#cce4f7" stroke="#0f5fa8"/></svg>
<svg class="a" style="left:43px;top:948px;" width="16" height="16" viewBox="0 0 16 16"><path d="M0 11v3.300L7.200 11z" fill="#1e3fae"/><path d="M9.500 10L16 6.700V10z" fill="#d62a1e"/><path d="M0 10.700L16 10" stroke="#222" stroke-width="1.300"/><ellipse cx="11" cy="4.500" rx="4.300" ry="3" fill="#dfe6f8" stroke="#3d3478" stroke-width="1"/><circle cx="11" cy="4.500" r="2.200" fill="#3e5cc0"/><circle cx="11" cy="4.500" r="1" fill="#0a0a20"/></svg>
<span class="t " style="top:949.5px;line-height:16px;height:16px;transform:scaleX(0.9524);transform-origin:0 50%;left:64px;">Werte an Flächen</span>
<svg class="a" style="left:11.5px;top:970px;" width="6" height="10" viewBox="0 0 6 10"><path d="M1 1l4 4-4 4" stroke="#8a8a8a" stroke-width="1.500" fill="none"/></svg>
<svg class="a" style="left:25px;top:968px;" width="13" height="13" viewBox="0 0 13 13"><rect x=".5" y=".5" width="12" height="12" fill="#cce4f7" stroke="#0f5fa8"/></svg>
<svg class="a" style="left:43px;top:967px;" width="17" height="17" viewBox="0 0 17 17"><rect width="17" height="17" fill="#1830d8"/><path d="M17 17H0A17 17 0 0 1 17 0z" fill="#20a0e8"/><path d="M17 17H2.6A14.4 14.4 0 0 1 17 2.6z" fill="#20d8c0"/><path d="M17 17H5.2A11.8 11.8 0 0 1 17 5.2z" fill="#30d040"/><path d="M17 17H7.8A9.2 9.2 0 0 1 17 7.8z" fill="#c8e020"/><path d="M17 17H10.4A6.6 6.6 0 0 1 17 10.4z" fill="#f0a010"/><path d="M17 17H13A4 4 0 0 1 17 13z" fill="#e02010"/></svg>
<span class="t " style="top:967.5px;line-height:16px;height:16px;transform:scaleX(0.9789);transform-origin:0 50%;left:64px;">Darstellungsart</span>
<svg class="a" style="left:11.5px;top:988px;" width="6" height="10" viewBox="0 0 6 10"><path d="M1 1l4 4-4 4" stroke="#8a8a8a" stroke-width="1.500" fill="none"/></svg>
<svg class="a" style="left:25px;top:986px;" width="13" height="13" viewBox="0 0 13 13"><rect x=".5" y=".5" width="12" height="12" fill="#fff" stroke="#333"/><path d="M2.500 6.500l3 3 5.500-6" stroke="#333" stroke-width="1.300" fill="none"/></svg>
<svg class="a" style="left:43px;top:984px;" width="16" height="16" viewBox="0 0 16 16"><path d="M0 11v3.300L7.200 11z" fill="#1e3fae"/><path d="M9.500 10L16 6.700V10z" fill="#d62a1e"/><path d="M0 10.700L16 10" stroke="#222" stroke-width="1.300"/><ellipse cx="11" cy="4.500" rx="4.300" ry="3" fill="#dfe6f8" stroke="#3d3478" stroke-width="1"/><circle cx="11" cy="4.500" r="2.200" fill="#3e5cc0"/><circle cx="11" cy="4.500" r="1" fill="#0a0a20"/></svg>
<span class="t " style="top:985.5px;line-height:16px;height:16px;transform:scaleX(0.9506);transform-origin:0 50%;left:64px;">Rippen - Effektiver Beitrag auf Fläche/Stab</span>
<svg class="a" style="left:11.5px;top:1006px;" width="6" height="10" viewBox="0 0 6 10"><path d="M1 1l4 4-4 4" stroke="#8a8a8a" stroke-width="1.500" fill="none"/></svg>
<svg class="a" style="left:25px;top:1004px;" width="13" height="13" viewBox="0 0 13 13"><rect x=".5" y=".5" width="12" height="12" fill="#cce4f7" stroke="#0f5fa8"/></svg>
<svg class="a" style="left:43px;top:1002px;" width="16" height="16" viewBox="0 0 16 16"><path d="M0 11v3.300L7.200 11z" fill="#1e3fae"/><path d="M9.500 10L16 6.700V10z" fill="#d62a1e"/><path d="M0 10.700L16 10" stroke="#222" stroke-width="1.300"/><ellipse cx="11" cy="4.500" rx="4.300" ry="3" fill="#dfe6f8" stroke="#3d3478" stroke-width="1"/><circle cx="11" cy="4.500" r="2.200" fill="#3e5cc0"/><circle cx="11" cy="4.500" r="1" fill="#0a0a20"/></svg>
<span class="t " style="top:1003.5px;line-height:16px;height:16px;transform:scaleX(0.9685);transform-origin:0 50%;left:64px;">Lagerreaktionen</span>
<svg class="a" style="left:11.5px;top:1024px;" width="6" height="10" viewBox="0 0 6 10"><path d="M1 1l4 4-4 4" stroke="#8a8a8a" stroke-width="1.500" fill="none"/></svg>
<svg class="a" style="left:25px;top:1022px;" width="13" height="13" viewBox="0 0 13 13"><rect x=".5" y=".5" width="12" height="12" fill="#cce4f7" stroke="#0f5fa8"/></svg>
<svg class="a" style="left:43px;top:1020px;" width="16" height="16" viewBox="0 0 16 16"><path d="M0 11v3.300L7.200 11z" fill="#1e3fae"/><path d="M9.500 10L16 6.700V10z" fill="#d62a1e"/><path d="M0 10.700L16 10" stroke="#222" stroke-width="1.300"/><ellipse cx="11" cy="4.500" rx="4.300" ry="3" fill="#dfe6f8" stroke="#3d3478" stroke-width="1"/><circle cx="11" cy="4.500" r="2.200" fill="#3e5cc0"/><circle cx="11" cy="4.500" r="1" fill="#0a0a20"/></svg>
<span class="t " style="top:1021.5px;line-height:16px;height:16px;transform:scaleX(0.9694);transform-origin:0 50%;left:64px;">Ergebnisschnitte</span>
<div class="a" style="left:4px;top:1149px;width:318px;height:1px;background:#c5c5d6;"></div>
<div class="a" style="left:4px;top:1150px;width:38px;height:22px;background:#f0f0f0;box-sizing:border-box;border:1px solid #c8c8d4;border-top:none;"></div>
<div class="a" style="left:43px;top:1150px;width:38px;height:22px;background:#f0f0f0;box-sizing:border-box;border:1px solid #c8c8d4;border-top:none;"></div>
<div class="a" style="left:81px;top:1150px;width:38px;height:22px;background:#f0f0f0;box-sizing:border-box;border:1px solid #c8c8d4;border-top:none;"></div>
<div class="a" style="left:118px;top:1150px;width:39px;height:24px;background:#fff;box-sizing:border-box;border:1px solid #c8c8d4;border-top:none;border-bottom:none;"></div>
<div class="a" style="left:157px;top:1150px;width:1px;height:24px;background:#c8c8d4;"></div>
<svg class="a" style="left:14px;top:1152px;" width="18" height="18" viewBox="0 0 18 18"><rect x="4" y="1" width="11" height="9" fill="#e8eefc" stroke="#4a6ad0" stroke-width=".8"/><rect x="4" y="1" width="11" height="2.500" fill="#3a5ad0"/><path d="M1 5h6l1 1.500h4V12H1z" fill="#f2c230" stroke="#b08a10" stroke-width=".6"/><path d="M6 10l5-1 3 4-5 1z" fill="#8ab4e8" stroke="#557" stroke-width=".5"/><circle cx="11" cy="14.500" r="1" fill="#d02020"/></svg>
<svg class="a" style="left:52px;top:1154px;" width="18" height="14" viewBox="0 0 18 14"><path d="M1 7c3-5 12-5 15 0-3 5-12 5-15 0z" fill="#eef2fb" stroke="#3a4690" stroke-width="1"/><circle cx="8.500" cy="7" r="3" fill="#26339a"/><circle cx="8.500" cy="7" r="1.200" fill="#0a0a30"/></svg>
<svg class="a" style="left:90px;top:1155px;" width="16" height="12" viewBox="0 0 16 12"><rect x=".5" y="1.500" width="9.500" height="8" rx="1.500" fill="#5b5b5b"/><path d="M10.500 5.500l4-3v7l-4-3z" fill="#5b5b5b"/></svg>
<svg class="a" style="left:129px;top:1154px;" width="16" height="12" viewBox="0 0 16 12"><path d="M0 8v3.300L7.200 8z" fill="#1e3fae"/><path d="M9.500 7L16 3.700V7z" fill="#d62a1e"/><path d="M0 7.700L16 7" stroke="#222" stroke-width="1.300"/></svg>
<svg class="a" style="left:328px;top:107px;overflow:hidden;" width="1271" height="822" viewBox="0 0 1271 822"><defs><linearGradient id="vbg" x1="0" y1="0" x2="1" y2="1"><stop offset="0" stop-color="#fdfdfd"/><stop offset="1" stop-color="#fafafa"/></linearGradient></defs><rect x="0" y="0" width="1271" height="822" fill="#fcfcfc"/><path d="M0 743L280 822" stroke="#f3f3f3" stroke-width="1"/><path d="M1225 822L1271 803" stroke="#f3f3f3" stroke-width="1"/><rect x="14.5" y="37.5" width="1.200" height="1.200" fill="#4a4a4a"/><rect x="40.5" y="133.5" width="1.200" height="1.200" fill="#4a4a4a"/><rect x="168.5" y="81.5" width="1.200" height="1.200" fill="#4a4a4a"/><rect x="296.5" y="28.5" width="1.200" height="1.200" fill="#4a4a4a"/><rect x="66.5" y="230.5" width="1.200" height="1.200" fill="#4a4a4a"/><rect x="194.5" y="177.5" width="1.200" height="1.200" fill="#4a4a4a"/><rect x="322.5" y="124.5" width="1.200" height="1.200" fill="#4a4a4a"/><rect x="449.5" y="71.5" width="1.200" height="1.200" fill="#4a4a4a"/><rect x="577.5" y="19.5" width="1.200" height="1.200" fill="#4a4a4a"/><rect x="92.5" y="326.5" width="1.200" height="1.200" fill="#4a4a4a"/><rect x="220.5" y="273.5" width="1.200" height="1.200" fill="#4a4a4a"/><rect x="348.5" y="220.5" width="1.200" height="1.200" fill="#4a4a4a"/><rect x="475.5" y="168.5" width="1.200" height="1.200" fill="#4a4a4a"/><rect x="603.5" y="115.5" width="1.200" height="1.200" fill="#4a4a4a"/><rect x="731.5" y="62.5" width="1.200" height="1.200" fill="#4a4a4a"/><rect x="859.5" y="10.5" width="1.200" height="1.200" fill="#4a4a4a"/><rect x="118.5" y="422.5" width="1.200" height="1.200" fill="#4a4a4a"/><rect x="246.5" y="369.5" width="1.200" height="1.200" fill="#4a4a4a"/><rect x="373.5" y="317.5" width="1.200" height="1.200" fill="#4a4a4a"/><rect x="501.5" y="264.5" width="1.200" height="1.200" fill="#4a4a4a"/><rect x="629.5" y="211.5" width="1.200" height="1.200" fill="#4a4a4a"/><rect x="757.5" y="159.5" width="1.200" height="1.200" fill="#4a4a4a"/><rect x="885.5" y="106.5" width="1.200" height="1.200" fill="#4a4a4a"/><rect x="1012.5" y="53.5" width="1.200" height="1.200" fill="#4a4a4a"/><rect x="1140.5" y="1.5" width="1.200" height="1.200" fill="#4a4a4a"/><rect x="16.5" y="571.5" width="1.200" height="1.200" fill="#4a4a4a"/><rect x="144.5" y="518.5" width="1.200" height="1.200" fill="#4a4a4a"/><rect x="271.5" y="466.5" width="1.200" height="1.200" fill="#4a4a4a"/><rect x="399.5" y="413.5" width="1.200" height="1.200" fill="#4a4a4a"/><rect x="527.5" y="360.5" width="1.200" height="1.200" fill="#4a4a4a"/><rect x="655.5" y="308.5" width="1.200" height="1.200" fill="#4a4a4a"/><rect x="783.5" y="255.5" width="1.200" height="1.200" fill="#4a4a4a"/><rect x="910.5" y="202.5" width="1.200" height="1.200" fill="#4a4a4a"/><rect x="1038.5" y="150.5" width="1.200" height="1.200" fill="#4a4a4a"/><rect x="1166.5" y="97.5" width="1.200" height="1.200" fill="#4a4a4a"/><rect x="42.5" y="667.5" width="1.200" height="1.200" fill="#4a4a4a"/><rect x="169.5" y="615.5" width="1.200" height="1.200" fill="#4a4a4a"/><rect x="297.5" y="562.5" width="1.200" height="1.200" fill="#4a4a4a"/><rect x="425.5" y="509.5" width="1.200" height="1.200" fill="#4a4a4a"/><rect x="553.5" y="457.5" width="1.200" height="1.200" fill="#4a4a4a"/><rect x="681.5" y="404.5" width="1.200" height="1.200" fill="#4a4a4a"/><rect x="808.5" y="351.5" width="1.200" height="1.200" fill="#4a4a4a"/><rect x="936.5" y="299.5" width="1.200" height="1.200" fill="#4a4a4a"/><rect x="1064.5" y="246.5" width="1.200" height="1.200" fill="#4a4a4a"/><rect x="1192.5" y="193.5" width="1.200" height="1.200" fill="#4a4a4a"/><rect x="67.5" y="764.5" width="1.200" height="1.200" fill="#4a4a4a"/><rect x="195.5" y="711.5" width="1.200" height="1.200" fill="#4a4a4a"/><rect x="323.5" y="658.5" width="1.200" height="1.200" fill="#4a4a4a"/><rect x="451.5" y="606.5" width="1.200" height="1.200" fill="#4a4a4a"/><rect x="579.5" y="553.5" width="1.200" height="1.200" fill="#4a4a4a"/><rect x="706.5" y="500.5" width="1.200" height="1.200" fill="#4a4a4a"/><rect x="834.5" y="448.5" width="1.200" height="1.200" fill="#4a4a4a"/><rect x="962.5" y="395.5" width="1.200" height="1.200" fill="#4a4a4a"/><rect x="1090.5" y="342.5" width="1.200" height="1.200" fill="#4a4a4a"/><rect x="1218.5" y="289.5" width="1.200" height="1.200" fill="#4a4a4a"/><rect x="221.5" y="807.5" width="1.200" height="1.200" fill="#4a4a4a"/><rect x="349.5" y="755.5" width="1.200" height="1.200" fill="#4a4a4a"/><rect x="477.5" y="702.5" width="1.200" height="1.200" fill="#4a4a4a"/><rect x="604.5" y="649.5" width="1.200" height="1.200" fill="#4a4a4a"/><rect x="732.5" y="596.5" width="1.200" height="1.200" fill="#4a4a4a"/><rect x="860.5" y="544.5" width="1.200" height="1.200" fill="#4a4a4a"/><rect x="988.5" y="491.5" width="1.200" height="1.200" fill="#4a4a4a"/><rect x="1116.5" y="438.5" width="1.200" height="1.200" fill="#4a4a4a"/><rect x="1243.5" y="386.5" width="1.200" height="1.200" fill="#4a4a4a"/><rect x="503.5" y="798.5" width="1.200" height="1.200" fill="#4a4a4a"/><rect x="630.5" y="745.5" width="1.200" height="1.200" fill="#4a4a4a"/><rect x="758.5" y="693.5" width="1.200" height="1.200" fill="#4a4a4a"/><rect x="886.5" y="640.5" width="1.200" height="1.200" fill="#4a4a4a"/><rect x="1014.5" y="587.5" width="1.200" height="1.200" fill="#4a4a4a"/><rect x="1142.5" y="535.5" width="1.200" height="1.200" fill="#4a4a4a"/><rect x="784.5" y="789.5" width="1.200" height="1.200" fill="#4a4a4a"/><rect x="912.5" y="736.5" width="1.200" height="1.200" fill="#4a4a4a"/><rect x="1040.5" y="684.5" width="1.200" height="1.200" fill="#4a4a4a"/><rect x="1167.5" y="631.5" width="1.200" height="1.200" fill="#4a4a4a"/><rect x="1065.5" y="780.5" width="1.200" height="1.200" fill="#4a4a4a"/><rect x="1193.5" y="727.5" width="1.200" height="1.200" fill="#4a4a4a"/><path d="M0 260.2L625.5 0" stroke="#b5f2f7" stroke-width="1.100" fill="none"/><path d="M509 0L578.3 19.8" stroke="#c5f3f7" stroke-width="1" fill="none"/><path d="M578.3 19.8L1272 217.5" stroke="#c9d6dd" stroke-width="2.800" fill="none"/><path d="M578.3 19.8L1272 217.5" stroke="#bdf1f7" stroke-width="1.600" fill="none" stroke-dasharray="3 1.500"/><path d="M67.2 230.6L67.2 265.6L194 266.2z" fill="#fcd5d5"/><path d="M67.2 230.6L67.2 265.6L194 266.2M143.6 265.9L143.6 252.356" stroke="#f4a0a0" stroke-width="1" fill="none"/><path d="M194 266.2L220.4 267.6 L297.4 269.6 L374.4 272.6 L451.4 279.2 L528 290 L604.6 306 L681.4 328.6 L758.4 356.2 L827.4 385.6 L896.4 417.8 L965.6 450 L1034.6 481.8 L1103.8 513.8 L1173.4 545.6z" fill="#e0ebf8"/><path d="M194 266.2L220.4 267.6 L297.4 269.6 L374.4 272.6 L451.4 279.2 L528 290 L604.6 306 L681.4 328.6 L758.4 356.2 L827.4 385.6 L896.4 417.8 L965.6 450 L1034.6 481.8 L1103.8 513.8 L1173.4 545.6" stroke="#9cc4f0" stroke-width="1" fill="none"/><path d="M220.4 267.6L220.4 274.225M297.4 269.6L297.4 296.151M374.4 272.6L374.4 318.078M451.4 279.2L451.4 340.004M528 290L528 361.817M604.6 306L604.6 383.629M681.4 328.6L681.4 405.499M758.4 356.2L758.4 427.425M827.4 385.6L827.4 447.074M896.4 417.8L896.4 466.722M965.6 450L965.6 486.427M1034.6 481.8L1034.6 506.076M1103.8 513.8L1103.8 525.781" stroke="#a9c8ee" stroke-width="1" fill="none"/><path d="M374.4 317.6L885 107.6" stroke="#b7b7b7" stroke-width="2" fill="none"/><path d="M758.4 427L1269 215.5" stroke="#b7b7b7" stroke-width="2" fill="none"/><circle cx="885.2" cy="107.3" r="2.200" fill="#a8dcfa"/><rect x="884.5" y="106.5" width="1.200" height="1.200" fill="#3a4a5a"/><circle cx="1269.5" cy="215.8" r="2.200" fill="#a8dcfa"/><path d="M67.2 230.6L194 266.2" stroke="#e88" stroke-width="1.600" fill="none"/><path d="M67.2 230.6L1173.4 545.6" stroke="#7cc0f2" stroke-width="1.700" fill="none"/><circle cx="374.4" cy="317.6" r="2.600" fill="#18a0f4"/><circle cx="758.4" cy="427" r="2.600" fill="#18a0f4"/><path d="M58.0 232.0L63.0 229.0L65.0 228.3L72.0 228.2L76.0 229.0L77.3 232.0L77.0 237.0L82.0 244.5L76.0 247.0L71.0 248.0L71.0 256.0L63.0 256.0L63.0 248.0L58.0 247.0L52.8 245.0L58.0 239.0L57.5 234.0z" fill="#27c427"/><path d="M58 238c4 4 12 1 14-4M55 245c5-3 12-2 14 2" stroke="#14b014" stroke-width="2.500" fill="none" opacity=".6"/><clipPath id="rh"><rect x="67.4" y="223" width="20" height="40"/></clipPath><g clip-path="url(#rh)"><path d="M58.0 232.0L63.0 229.0L65.0 228.3L72.0 228.2L76.0 229.0L77.3 232.0L77.0 237.0L82.0 244.5L76.0 247.0L71.0 248.0L71.0 256.0L63.0 256.0L63.0 248.0L58.0 247.0L52.8 245.0L58.0 239.0L57.5 234.0z" fill="#a5a868"/><path d="M67 231l9 0 1 8-10 6z" fill="#86a850"/></g><path d="M67.2 233V265.4" stroke="#e0a0a0" stroke-width="1"/><path d="M1163 550L1171 546L1177 543L1181 543L1184 545.5L1184 552L1188 558L1188 563L1184 562L1180 560L1177 564L1177 571L1169.5 570.5L1169 565L1159 564L1159 560L1163 557z" fill="#22c422"/><path d="M1165 556L1183 548.5" stroke="#12ac12" stroke-width="3" opacity=".8"/><path d="M1161 561.5l8 2.300M1185 560h3" stroke="#fff" stroke-width="1.200"/><path d="M1173 558v12" stroke="#14b014" stroke-width="4" opacity=".7"/><circle cx="67.1" cy="230.5" r="2.400" fill="#f01010"/><circle cx="1173.3" cy="545" r="2.400" fill="#f01010"/><circle cx="67.1" cy="265.3" r="2.200" fill="#b85a5a"/><circle cx="604.6" cy="306" r="2" fill="#6a7890"/><text x="67.5" y="278" font-size="11" fill="#e06060" text-anchor="middle">0.32</text><text x="604.5" y="302" font-size="11" fill="#70829c" text-anchor="middle">-0.72</text><g transform="translate(578.3 20)"><path d="M-8.7 1.2L-3.7 -1.8L-1.7 -2.5L5.3 -2.6L9.3 -1.8L10.6 1.2L10.3 6.2L15.3 13.7L9.3 16.2L4.3 17.2L4.3 25.2L-3.7 25.2L-3.7 17.2L-8.7 16.2L-13.9 14.2L-8.7 8.2L-9.2 3.2z" fill="#a6e3a6"/><path d="M0 0V30" stroke="#10108c" stroke-width="3"/><path d="M-3.500 27h7L0 37z" fill="#0a0a70"/><path d="M0 0L24 7" stroke="#e01010" stroke-width="3"/><path d="M22 3l8 6-10 2z" fill="#f01010"/><path d="M0 0L-19 8" stroke="#10d810" stroke-width="3"/><path d="M-17 4l-8 7 10 1z" fill="#10c810"/><circle cx="0" cy="-.5" r="3.200" fill="#f2d810"/><circle cx="-.8" cy="-1.300" r="1.300" fill="#fff27a"/><text x="38" y="15" font-size="11.500" fill="#f01010" text-anchor="middle">X</text><text x="-32" y="17" font-size="11.500" fill="#10c810" text-anchor="middle">Y</text><text x="0" y="51" font-size="11.500" fill="#1010a0" text-anchor="middle">Z</text></g><g transform="translate(59 745.6)"><path d="M0 0V30" stroke="#10108c" stroke-width="3"/><path d="M-3.500 27h7L0 37z" fill="#0a0a70"/><path d="M0 0L24 7" stroke="#e01010" stroke-width="3"/><path d="M22 3l8 6-10 2z" fill="#f01010"/><path d="M0 0L-19 8" stroke="#10d810" stroke-width="3"/><path d="M-17 4l-8 7 10 1z" fill="#10c810"/><circle cx="0" cy="-.5" r="3.200" fill="#f2d810"/><circle cx="-.8" cy="-1.300" r="1.300" fill="#fff27a"/><text x="38" y="15" font-size="11.500" fill="#f01010" text-anchor="middle">X</text><text x="-32" y="17" font-size="11.500" fill="#10c810" text-anchor="middle">Y</text><text x="0" y="51" font-size="11.500" fill="#1010a0" text-anchor="middle">Z</text></g></svg>
<span class="t " style="top:111.5px;line-height:16px;height:16px;font-size:12.5px;transform:scaleX(0.9534);transform-origin:0 50%;left:333px;">Sichtbarkeitsmodus</span>
<span class="t " style="top:128.5px;line-height:16px;height:16px;font-size:12.5px;transform:scaleX(0.8788);transform-origin:0 50%;left:333px;">LK1 - 1.35 * LF1</span>
<span class="t " style="top:145.5px;line-height:16px;height:16px;font-size:12.5px;transform:scaleX(0.9222);transform-origin:0 50%;left:333px;">Statische Analyse</span>
<span class="t " style="top:162.5px;line-height:16px;height:16px;font-size:12.5px;transform:scaleX(1.0217);transform-origin:0 50%;left:333px;">Momente M<sub class="s2">ω</sub> [kNm<sup class="s3">2</sup>]</span>
<span class="t " style="top:911.5px;line-height:16px;height:16px;font-size:12.5px;transform:scaleX(0.9683);transform-origin:0 50%;left:333px;">max M<sub class="s2">ω</sub> : 0.32 | min M<sub class="s2">ω</sub> : -0.72 kNm<sup class="s3">2</sup></span>
<svg class="a" style="left:1470px;top:115px;" width="125" height="115" viewBox="0 0 125 115"><path d="M57 11L12 29 65 44 110 26z" fill="#8d8d8d" stroke="#6f6b6b" stroke-width="1.300" stroke-linejoin="round"/><path d="M12 29L65 44V108L12 94z" fill="#bdbdbd" stroke="#6f6b6b" stroke-width="1.300" stroke-linejoin="round"/><path d="M65 44L110 26V90L65 108z" fill="#b4b4b4" stroke="#6f6b6b" stroke-width="1.300" stroke-linejoin="round"/><path d="M25.515 32.825L25.515 97.57M12 45.575L65 60.32M76.475 39.41L76.475 103.41M65 60.32L110 42.32M70.515 14.825L25.515 32.825M45.525 15.59L98.525 30.59M51.75 40.25L51.75 104.5M12 77.75L65 92M98.75 30.5L98.75 94.5M65 92L110 74M96.75 22.25L51.75 40.25M23.25 24.5L76.25 39.5" stroke="#6f6b6b" stroke-width="1.300" fill="none"/><text x="39" y="75.500" font-size="12.500" font-weight="bold" fill="#2cb84a" text-anchor="middle" transform="skewY(15.800)" transform-origin="39 71">-Y</text><text x="87" y="73.500" font-size="12.500" font-weight="bold" fill="#e03c3c" text-anchor="middle" transform="skewY(-21.800)" transform-origin="87 69">-X</text><text x="61" y="31.500" font-size="7.500" font-weight="bold" fill="#30388c" text-anchor="middle" opacity=".85">+Z</text></svg>
<div class="a" style="left:328px;top:933px;width:1271px;height:21px;background:#d9e6f4;"></div>
<span class="t " style="top:935.5px;line-height:16px;height:16px;color:#303030;font-weight:bold;transform:scaleX(1.0047);transform-origin:0 50%;left:334.5px;">Materialien</span>
<svg class="a" style="left:1558px;top:937px;" width="36" height="14" viewBox="0 0 36 14"><path d="M4.500 6.500h5v4h-5zM6.500 6V3.500h5V8H10" stroke="#3a3a3a" stroke-width="1.300" fill="none"/><path d="M25.500 3.500l6 6M31.500 3.500l-6 6" stroke="#3a3a3a" stroke-width="1.600"/></svg>
<div class="a" style="left:328px;top:954px;width:1271px;height:21px;background:#f7f7f7;"></div>
<span class="t " style="top:956.5px;line-height:16px;height:16px;transform:scaleX(0.9036);transform-origin:0 50%;left:336.5px;">Gehe zu</span>
<span class="t " style="top:956.5px;line-height:16px;height:16px;transform:scaleX(0.9475);transform-origin:0 50%;left:394px;">Bearbeiten</span>
<span class="t " style="top:956.5px;line-height:16px;height:16px;transform:scaleX(0.9722);transform-origin:0 50%;left:465px;">Selektion</span>
<span class="t " style="top:956.5px;line-height:16px;height:16px;transform:scaleX(0.9655);transform-origin:0 50%;left:529px;">Ansicht</span>
<span class="t " style="top:956.5px;line-height:16px;height:16px;transform:scaleX(0.9853);transform-origin:0 50%;left:583px;">Einstellungen</span>
<div class="a" style="left:328px;top:974px;width:1271px;height:1px;background:#e6e6e6;"></div>
<div class="a" style="left:328px;top:975px;width:1271px;height:27px;background:#f5f5f5;"></div>
<div class="a" style="left:330px;top:977px;width:200px;height:21px;background:#e8e8f3;"></div>
<svg class="a" style="left:335px;top:980px;" width="14" height="14" viewBox="0 0 14 14"><rect x=".5" y=".5" width="13" height="13" fill="#c9c9c9" stroke="#6a6a6a"/><rect x="1" y="1" width="12" height="2.500" fill="#3a58c8"/><path d="M2 5.500h5M2 8h4M2 10.500h3" stroke="#eee" stroke-width="1.200"/><path d="M12 4.500V12H4.500z" fill="#9af09a" stroke="#4a4" stroke-width=".8"/></svg>
<span class="t " style="top:979.5px;line-height:16px;height:16px;transform:scaleX(0.9996);transform-origin:0 50%;left:354px;">Struktur</span>
<svg class="a" style="left:515px;top:984px;" width="11" height="7" viewBox="0 0 11 7"><path d="M1 1l4 4 4-4" stroke="#444" stroke-width="1.100" fill="none"/></svg>
<div class="a" style="left:531px;top:977px;width:14px;height:21px;background:#d2d2d8;"></div>
<div class="a" style="left:546px;top:977px;width:17px;height:21px;background:#e8e8f3;"></div>
<svg class="a" style="left:531px;top:977px;" width="32" height="21" viewBox="0 0 32 21"><path d="M9 6.500v8l-4.500-4z" fill="#333"/><path d="M21 6.500v8l4.500-4z" fill="#111"/></svg>
<div class="a" style="left:567px;top:977px;width:1px;height:21px;background:#d8d8d8;"></div>
<div class="a" style="left:572px;top:977px;width:271px;height:21px;background:#e8e8f3;"></div>
<svg class="a" style="left:576px;top:979px;" width="18" height="18" viewBox="0 0 18 18"><path d="M2 14L13 3" stroke="#9ab4e4" stroke-width="3.500"/><path d="M2 14L13 3" stroke="#c4d4f0" stroke-width="1.500"/><circle cx="2.500" cy="14" r="1.600" fill="#e01818"/><circle cx="13" cy="3" r="1.600" fill="#e01818"/><path d="M11 11h5M13.500 11v5M11 16h5" stroke="#6a7a9a" stroke-width="1.200"/></svg>
<span class="t " style="top:979.5px;line-height:16px;height:16px;transform:scaleX(0.9405);transform-origin:0 50%;left:597px;">Basisobjekte</span>
<svg class="a" style="left:828px;top:984px;" width="11" height="7" viewBox="0 0 11 7"><path d="M1 1l4 4 4-4" stroke="#444" stroke-width="1.100" fill="none"/></svg>
<div class="a" style="left:844px;top:977px;width:14px;height:21px;background:#d2d2d8;"></div>
<div class="a" style="left:859px;top:977px;width:17px;height:21px;background:#e8e8f3;"></div>
<svg class="a" style="left:844px;top:977px;" width="32" height="21" viewBox="0 0 32 21"><path d="M9 6.500v8l-4.500-4z" fill="#333"/><path d="M21 6.500v8l4.500-4z" fill="#111"/></svg>
<div class="a" style="left:879px;top:978px;width:1px;height:20px;background:#d8d8d8;"></div>
<div class="a" style="left:878px;top:978px;width:1px;height:20px;background:#d4d4d4;"></div>
<div class="a" style="left:883px;top:976px;width:25px;height:23px;background:#cce4f7;box-sizing:border-box;border:1px solid #99ccf2;"></div>
<div class="a" style="left:909px;top:976px;width:25px;height:23px;background:#cce4f7;box-sizing:border-box;border:1px solid #99ccf2;"></div>
<svg class="a" style="left:887px;top:979px;" width="18" height="18" viewBox="0 0 18 18"><rect x="4.500" y="2.500" width="7" height="5" rx="1" fill="#e4e4e4" stroke="#666"/><path d="M14 16c1-5-1-8-5-9" stroke="#2c56b8" stroke-width="1.700" fill="none"/><path d="M7 5.500l5 .5-3 4.500z" fill="#2c56b8"/></svg>
<svg class="a" style="left:913px;top:979px;" width="18" height="18" viewBox="0 0 18 18"><rect x="7.500" y="2.500" width="7" height="5" rx="1" fill="#e4e4e4" stroke="#666"/><path d="M7 4c-3 2-4 6-1 10" stroke="#2c56b8" stroke-width="1.700" fill="none"/><path d="M3.500 12l6 1-3.500 4z" fill="#2c56b8"/></svg>
<div class="a" style="left:937px;top:978px;width:1px;height:20px;background:#d4d4d4;"></div>
<svg class="a" style="left:945px;top:979px;" width="18" height="18" viewBox="0 0 18 18"><rect x=".5" y="1.500" width="17" height="15" fill="#d8d8d8" stroke="#8c8c8c"/><path d="M1 4h16M1 7h16" stroke="#666" stroke-width="1.600"/><path d="M1 10h16M1 13h16M6 2v14M12 2v14" stroke="#888" stroke-width="1"/><path d="M1 15.500h16" stroke="#666" stroke-width="1.500"/></svg>
<svg class="a" style="left:971px;top:979px;" width="18" height="18" viewBox="0 0 18 18"><rect x=".5" y="7.500" width="17" height="9" fill="#f4f4f4" stroke="#8c8c8c"/><path d="M1 10.500h16M1 13.500h16M6 8v8M12 8v8" stroke="#aaa" stroke-width=".8"/><path d="M3 3l11 3" stroke="#aaa" stroke-width="1.200"/><circle cx="3" cy="3" r="1.300" fill="#bbb"/><circle cx="14" cy="6" r="1.300" fill="#bbb"/></svg>
<svg class="a" style="left:997px;top:979px;" width="18" height="18" viewBox="0 0 18 18"><rect x=".5" y="1.500" width="17" height="16" fill="#dedede" stroke="#8c8c8c"/><path d="M1 5.500h16M1 9.500h16M1 13.500h16M5 2v15M9 2v15M13 2v15" stroke="#c8c8c8" stroke-width=".7"/><path d="M9 4v11M3.500 9.500h11" stroke="#a8a8a8" stroke-width="3.600"/></svg>
<svg class="a" style="left:1023px;top:979px;" width="18" height="18" viewBox="0 0 18 18"><rect x=".5" y="1.500" width="17" height="16" fill="#dedede" stroke="#8c8c8c"/><path d="M1 5.500h16M1 9.500h16M1 13.500h16M5 2v15M9 2v15M13 2v15" stroke="#c8c8c8" stroke-width=".7"/><path d="M5 5.500l8 8M13 5.500l-8 8" stroke="#a8a8a8" stroke-width="3.400"/></svg>
<svg class="a" style="left:1049px;top:979px;" width="18" height="18" viewBox="0 0 18 18"><rect x=".5" y="1.500" width="17" height="16" fill="#dedede" stroke="#8c8c8c"/><path d="M1 5.500h16M1 9.500h16M1 13.500h16M5 2v15M9 2v15M13 2v15" stroke="#c8c8c8" stroke-width=".7"/><circle cx="9" cy="6" r="2.600" fill="#a8a8a8"/><circle cx="9" cy="13" r="2.600" fill="#a8a8a8"/></svg>
<div class="a" style="left:1074px;top:978px;width:1px;height:20px;background:#d4d4d4;"></div>
<svg class="a" style="left:1082px;top:979px;" width="18" height="18" viewBox="0 0 18 18"><rect x=".5" y="1.500" width="17" height="16" fill="#e6e6e6" stroke="#777"/><path d="M3.500 4.500l11 10M14.500 4.500l-11 10" stroke="#707070" stroke-width="3.400"/></svg>
<div class="a" style="left:1107px;top:978px;width:1px;height:20px;background:#d4d4d4;"></div>
<svg class="a" style="left:1114px;top:979px;" width="18" height="18" viewBox="0 0 18 18"><path d="M2.500 1.500h7v4M2.500 1.500v15h7" stroke="#aaa" fill="none"/><rect x="2" y="5.500" width="8" height="4.500" fill="#8a8a8a"/><rect x="2" y="11.500" width="8" height="4.500" fill="#8a8a8a"/><path d="M12 9c4 0 5 4 2 6" stroke="#777" stroke-width="1.700" fill="none"/><path d="M15 12.500l-1 4-3.500-2z" fill="#777"/></svg>
<svg class="a" style="left:1141px;top:979px;" width="18" height="18" viewBox="0 0 18 18"><path d="M1.500 1.500h7v3M1.500 16.500h7v-3M1.500 1.500v15" stroke="#aaa" fill="none"/><rect x="1" y="6" width="8" height="6" fill="#8a8a8a"/><path d="M10 5l7 8M17 5l-7 8" stroke="#777" stroke-width="1.800"/></svg>
<svg class="a" style="left:1167px;top:979px;" width="18" height="18" viewBox="0 0 18 18"><path d="M3.500 1.500h7v4M3.500 16.500h7v-4M3.500 1.500v15" stroke="#b8b8b8" fill="none"/><path d="M17 8h-9M17 10.500h-9" stroke="#999" stroke-width="1.300"/><path d="M9 5.500v7.500l-5-3.700z" fill="#999"/></svg>
<svg class="a" style="left:1193px;top:979px;" width="18" height="18" viewBox="0 0 18 18"><path d="M1.500 1.500h7v4M1.500 16.500h7v-4M1.500 1.500v15M1.500 6.500h7M1.500 11.500h7" stroke="#b8b8b8" fill="none"/><path d="M7 9.200h7" stroke="#999" stroke-width="2.200"/><path d="M12.500 5.500v7.500l5-3.700z" fill="#999"/></svg>
<div class="a" style="left:1219px;top:978px;width:1px;height:20px;background:#d4d4d4;"></div>
<svg class="a" style="left:1226px;top:979px;" width="18" height="18" viewBox="0 0 18 18"><rect x=".5" y="1.500" width="17" height="16" fill="#fcfcfc" stroke="#666"/><rect x="1" y="2" width="16" height="6.500" fill="#b8bcf0"/><path d="M1 5h16M6.500 2v6.500M12 2v6.500" stroke="#e8e8ff" stroke-width=".8"/><path d="M1 8.500h16" stroke="#888" stroke-width=".8"/></svg>
<div class="a" style="left:1252px;top:978px;width:1px;height:20px;background:#d4d4d4;"></div>
<svg class="a" style="left:1259px;top:979px;" width="18" height="18" viewBox="0 0 18 18"><rect x="8.500" y=".5" width="9" height="7" fill="#f0f0f0" stroke="#666"/><rect x="9" y="1" width="8" height="2.500" fill="#2d48c0"/><text x="0" y="16" font-size="9" font-style="italic" font-weight="bold" class="sf" fill="#222">ab</text><path d="M12 12.500h5M12 15h5" stroke="#555" stroke-width="1"/></svg>
<svg class="a" style="left:1285px;top:979px;" width="18" height="18" viewBox="0 0 18 18"><text x="1" y="14.500" font-size="15" font-style="italic" class="sf" fill="#8a8a8a">fx</text></svg>
<svg class="a" style="left:1311px;top:979px;" width="18" height="18" viewBox="0 0 18 18"><text x="1" y="14.500" font-size="15" font-style="italic" class="sf" fill="#8a8a8a">fx</text><path d="M9 1l7 7M16 1l-7 7" stroke="#8a8a8a" stroke-width="2.400"/></svg>
<svg class="a" style="left:1337px;top:979px;" width="18" height="18" viewBox="0 0 18 18"><text x="1" y="15.500" font-size="15" font-style="italic" font-weight="bold" class="sf" fill="#222">fx</text><ellipse cx="12.500" cy="3.500" rx="4.300" ry="2.700" fill="#e6ebf8" stroke="#7482a8" stroke-width=".8"/><circle cx="12.500" cy="3.500" r="2" fill="#27348f"/></svg>
<div class="a" style="left:1363px;top:978px;width:1px;height:20px;background:#d4d4d4;"></div>
<svg class="a" style="left:1370px;top:979px;" width="18" height="18" viewBox="0 0 18 18"><path d="M5.500 1.500h8l3 3v12h-11z" fill="#fff" stroke="#666"/><rect x="8" y="4" width="7" height="7" fill="#fff" stroke="#3a9a48" stroke-width=".8"/><path d="M8 6.500h7M8 8.800h7M10.500 4v7M12.800 4v7" stroke="#3a9a48" stroke-width=".7"/><rect x="1" y="3" width="7" height="8" fill="#2f9a48"/><path d="M2.500 4.500l4 5M6.500 4.500l-4 5" stroke="#fff" stroke-width="1.300"/><path d="M7.500 12.500h6L10.500 16z" fill="#3aaa58"/></svg>
<div class="a" style="left:1396px;top:978px;width:1px;height:20px;background:#d4d4d4;"></div>
<svg class="a" style="left:1403px;top:979px;" width="18" height="18" viewBox="0 0 18 18"><rect x="1.500" y="6.500" width="15" height="10" fill="#ececec" stroke="#999"/><path d="M4 10.500h4M10 10.500h4M4 13.500h4M10 13.500h4" stroke="#aaa" stroke-width="1.600"/><path d="M3 5c2-3 6-4 9-2l3 2-2 3-3 1-2-2-4 0z" fill="#d4d4d4" stroke="#999" stroke-width=".6"/><path d="M12 1.500l4.500 1v4" stroke="#bbb" fill="none" stroke-width="1.500"/></svg>
<div class="a" style="left:1427px;top:975px;width:30px;height:25px;background:#f5f5f5;box-sizing:border-box;border:1px solid #e2e2e2;"></div>
<svg class="a" style="left:1431px;top:979px;" width="22" height="18" viewBox="0 0 22 18"><rect x="1" y=".5" width="18" height="4" fill="#6cc864"/><path d="M3 3v1.500M6 3v1.500M9 3v1.500M12 3v1.500M15 3v1.500M17 3v1.500" stroke="#3a8a38" stroke-width=".7"/><text x="0" y="15" font-size="10.500" fill="#111" letter-spacing="-.3">0,</text><text x="8.500" y="15" font-size="10.500" fill="#1c2c9c" letter-spacing="-.3" text-decoration="underline">00</text><path d="M9 16.500h11" stroke="#1c2c9c" stroke-width="1"/></svg>
<div class="a" style="left:328px;top:1002px;width:1271px;height:152px;background:#c4c4d0;"></div>
<div class="a" style="left:329px;top:1003px;width:1269px;height:150px;background:#fff;"></div>
<div class="a" style="left:329px;top:1003px;width:59px;height:9px;background:#e1e1e1;"></div>
<div class="a" style="left:329px;top:1013px;width:59px;height:31px;background:#e1e1e1;"></div>
<div class="a" style="left:389px;top:1003px;width:249px;height:9px;background:#e1e1e1;"></div>
<div class="a" style="left:389px;top:1013px;width:249px;height:31px;background:#f0f0f0;"></div>
<div class="a" style="left:639px;top:1003px;width:99px;height:9px;background:#e1e1e1;"></div>
<div class="a" style="left:639px;top:1013px;width:99px;height:31px;background:#f0f0f0;"></div>
<div class="a" style="left:739px;top:1003px;width:199px;height:9px;background:#e1e1e1;"></div>
<div class="a" style="left:739px;top:1013px;width:199px;height:31px;background:#f0f0f0;"></div>
<div class="a" style="left:939px;top:1003px;width:99px;height:9px;background:#e1e1e1;"></div>
<div class="a" style="left:939px;top:1013px;width:99px;height:31px;background:#f0f0f0;"></div>
<div class="a" style="left:1039px;top:1003px;width:99px;height:9px;background:#e1e1e1;"></div>
<div class="a" style="left:1039px;top:1013px;width:99px;height:31px;background:#f0f0f0;"></div>
<div class="a" style="left:1139px;top:1003px;width:99px;height:9px;background:#e1e1e1;"></div>
<div class="a" style="left:1139px;top:1013px;width:99px;height:31px;background:#f0f0f0;"></div>
<div class="a" style="left:1239px;top:1003px;width:99px;height:9px;background:#e1e1e1;"></div>
<div class="a" style="left:1239px;top:1013px;width:99px;height:31px;background:#f0f0f0;"></div>
<div class="a" style="left:1339px;top:1003px;width:99px;height:9px;background:#e1e1e1;"></div>
<div class="a" style="left:1339px;top:1013px;width:99px;height:31px;background:#f0f0f0;"></div>
<div class="a" style="left:1439px;top:1003px;width:99px;height:9px;background:#e1e1e1;"></div>
<div class="a" style="left:1439px;top:1013px;width:99px;height:31px;background:#f0f0f0;"></div>
<div class="a" style="left:1539px;top:1003px;width:41px;height:9px;background:#e1e1e1;"></div>
<div class="a" style="left:1539px;top:1013px;width:41px;height:31px;background:#f0f0f0;"></div>
<div class="a" style="left:329px;top:1045px;width:59px;height:15px;background:#e1e1e1;"></div>
<span class="t " style="top:1044px;line-height:16px;height:16px;transform:scaleX(0.9550);transform-origin:50% 50%;left:58.5px;width:600px;text-align:center;">1</span>
<div class="a" style="left:329px;top:1061px;width:59px;height:15px;background:#e1e1e1;"></div>
<span class="t " style="top:1060px;line-height:16px;height:16px;transform:scaleX(0.9550);transform-origin:50% 50%;left:58.5px;width:600px;text-align:center;">2</span>
<div class="a" style="left:329px;top:1077px;width:59px;height:15px;background:#e1e1e1;"></div>
<span class="t " style="top:1076px;line-height:16px;height:16px;transform:scaleX(0.9550);transform-origin:50% 50%;left:58.5px;width:600px;text-align:center;">3</span>
<div class="a" style="left:329px;top:1093px;width:59px;height:15px;background:#e1e1e1;"></div>
<span class="t " style="top:1092px;line-height:16px;height:16px;transform:scaleX(0.9550);transform-origin:50% 50%;left:58.5px;width:600px;text-align:center;">4</span>
<div class="a" style="left:329px;top:1109px;width:59px;height:15px;background:#e1e1e1;"></div>
<span class="t " style="top:1108px;line-height:16px;height:16px;transform:scaleX(0.9550);transform-origin:50% 50%;left:58.5px;width:600px;text-align:center;">5</span>
<div class="a" style="left:329px;top:1125px;width:59px;height:12px;background:#e1e1e1;"></div>
<span class="t " style="top:1124px;line-height:16px;height:16px;transform:scaleX(0.9550);transform-origin:50% 50%;left:58.5px;width:600px;text-align:center;">6</span>
<div class="a" style="left:939px;top:1045px;width:99px;height:15px;background:#fbfbf3;"></div>
<div class="a" style="left:1039px;top:1045px;width:99px;height:15px;background:#fbfbf3;"></div>
<div class="a" style="left:1139px;top:1045px;width:99px;height:15px;background:#fbfbf3;"></div>
<div class="a" style="left:1239px;top:1045px;width:99px;height:15px;background:#fbfbf3;"></div>
<div class="a" style="left:1339px;top:1045px;width:99px;height:15px;background:#fbfbf3;"></div>
<div class="a" style="left:1439px;top:1045px;width:99px;height:15px;background:#fbfbf3;"></div>
<div class="a" style="left:1139px;top:1061px;width:99px;height:76px;background:#f8f8ee;"></div>
<div class="a" style="left:389px;top:1060px;width:1193px;height:1px;background:#e2e2e2;"></div>
<div class="a" style="left:329px;top:1060px;width:59px;height:1px;background:#f4f4f4;"></div>
<div class="a" style="left:389px;top:1076px;width:1193px;height:1px;background:#e2e2e2;"></div>
<div class="a" style="left:329px;top:1076px;width:59px;height:1px;background:#f4f4f4;"></div>
<div class="a" style="left:389px;top:1092px;width:1193px;height:1px;background:#e2e2e2;"></div>
<div class="a" style="left:329px;top:1092px;width:59px;height:1px;background:#f4f4f4;"></div>
<div class="a" style="left:389px;top:1108px;width:1193px;height:1px;background:#e2e2e2;"></div>
<div class="a" style="left:329px;top:1108px;width:59px;height:1px;background:#f4f4f4;"></div>
<div class="a" style="left:389px;top:1124px;width:1193px;height:1px;background:#e2e2e2;"></div>
<div class="a" style="left:329px;top:1124px;width:59px;height:1px;background:#f4f4f4;"></div>
<div class="a" style="left:638px;top:1045px;width:1px;height:92px;background:#e2e2e2;"></div>
<div class="a" style="left:738px;top:1045px;width:1px;height:92px;background:#e2e2e2;"></div>
<div class="a" style="left:938px;top:1045px;width:1px;height:92px;background:#e2e2e2;"></div>
<div class="a" style="left:1038px;top:1045px;width:1px;height:92px;background:#e2e2e2;"></div>
<div class="a" style="left:1138px;top:1045px;width:1px;height:92px;background:#e2e2e2;"></div>
<div class="a" style="left:1238px;top:1045px;width:1px;height:92px;background:#e2e2e2;"></div>
<div class="a" style="left:1338px;top:1045px;width:1px;height:92px;background:#e2e2e2;"></div>
<div class="a" style="left:1438px;top:1045px;width:1px;height:92px;background:#e2e2e2;"></div>
<div class="a" style="left:1538px;top:1045px;width:1px;height:92px;background:#e2e2e2;"></div>
<div class="a" style="left:388px;top:1045px;width:1px;height:92px;background:#f0f0f0;"></div>
<div class="a" style="left:329px;top:1044px;width:1253px;height:1px;background:#d9d9d9;"></div>
<span class="t " style="top:1014.5px;line-height:16px;height:16px;transform:scaleX(0.9839);transform-origin:50% 50%;left:58.5px;width:600px;text-align:center;">Material</span>
<span class="t " style="top:1027.5px;line-height:16px;height:16px;transform:scaleX(0.9776);transform-origin:50% 50%;left:58.5px;width:600px;text-align:center;">Nr.</span>
<span class="t " style="top:1027.5px;line-height:16px;height:16px;transform:scaleX(0.9370);transform-origin:50% 50%;left:213.5px;width:600px;text-align:center;">Name des Materials</span>
<span class="t " style="top:1014.5px;line-height:16px;height:16px;transform:scaleX(1.0067);transform-origin:50% 50%;left:388.5px;width:600px;text-align:center;">Material-</span>
<span class="t " style="top:1027.5px;line-height:16px;height:16px;transform:scaleX(0.9990);transform-origin:50% 50%;left:388.5px;width:600px;text-align:center;">typ</span>
<span class="t " style="top:1027.5px;line-height:16px;height:16px;transform:scaleX(0.9868);transform-origin:50% 50%;left:538.5px;width:600px;text-align:center;">Materialmodell</span>
<span class="t " style="top:1011.5px;line-height:16px;height:16px;transform:scaleX(0.9773);transform-origin:50% 50%;left:688.5px;width:600px;text-align:center;">Elastizitätsmodul</span>
<span class="t " style="top:1027.5px;line-height:16px;height:16px;transform:scaleX(0.8859);transform-origin:50% 50%;left:688.5px;width:600px;text-align:center;">E [N/mm<sup class="s4">2</sup>]</span>
<span class="t " style="top:1011.5px;line-height:16px;height:16px;transform:scaleX(0.9593);transform-origin:50% 50%;left:788.5px;width:600px;text-align:center;">Schubmodul</span>
<span class="t " style="top:1027.5px;line-height:16px;height:16px;transform:scaleX(0.9004);transform-origin:50% 50%;left:788.5px;width:600px;text-align:center;">G [N/mm<sup class="s4">2</sup>]</span>
<span class="t " style="top:1011.5px;line-height:16px;height:16px;transform:scaleX(0.9683);transform-origin:50% 50%;left:888.5px;width:600px;text-align:center;">Querdehnzahl</span>
<span class="t " style="top:1027.5px;line-height:16px;height:16px;transform:scaleX(1.0000);transform-origin:50% 50%;left:888.5px;width:600px;text-align:center;">ν [--]</span>
<span class="t " style="top:1011.5px;line-height:16px;height:16px;transform:scaleX(0.9305);transform-origin:50% 50%;left:988.5px;width:600px;text-align:center;">Spez. Gewicht</span>
<span class="t " style="top:1027.5px;line-height:16px;height:16px;transform:scaleX(0.9734);transform-origin:50% 50%;left:988.5px;width:600px;text-align:center;">γ [kN/m<sup class="s4">3</sup>]</span>
<span class="t " style="top:1011.5px;line-height:16px;height:16px;transform:scaleX(0.9440);transform-origin:50% 50%;left:1088.5px;width:600px;text-align:center;">Mass Density</span>
<span class="t " style="top:1027.5px;line-height:16px;height:16px;transform:scaleX(0.9555);transform-origin:50% 50%;left:1088.5px;width:600px;text-align:center;">ρ [kg/m<sup class="s4">3</sup>]</span>
<span class="t " style="top:1011.5px;line-height:16px;height:16px;transform:scaleX(0.9614);transform-origin:50% 50%;left:1188.5px;width:600px;text-align:center;">Wärmedehnzahl</span>
<span class="t " style="top:1027.5px;line-height:16px;height:16px;transform:scaleX(0.8906);transform-origin:50% 50%;left:1188.5px;width:600px;text-align:center;">α [1/°C]</span>
<div class="a" style="left:1539px;top:1013px;width:42px;height:31px;overflow:hidden"><span class="t" style="left:17px;top:14.5px;line-height:16px;transform:scaleX(.95);transform-origin:0 50%">Optionen</span></div>
<div class="a" style="left:1580px;top:1013px;width:2px;height:31px;background:#f0f0f0;"></div>
<div class="a" style="left:393px;top:1047px;width:11px;height:11px;background:#4da6ff;"></div>
<span class="t " style="top:1044.5px;line-height:16px;height:16px;transform:scaleX(0.8941);transform-origin:0 50%;left:409px;">S235 | EN 1993-1-1:2005-05</span>
<div class="a" style="left:643px;top:1047px;width:11px;height:11px;background:#e8732c;"></div>
<span class="t " style="top:1044.5px;line-height:16px;height:16px;transform:scaleX(0.9503);transform-origin:0 50%;left:659px;">Stahl</span>
<div class="a" style="left:743px;top:1047px;width:11px;height:11px;background:#c8fbff;"></div>
<span class="t " style="top:1044.5px;line-height:16px;height:16px;transform:scaleX(0.9695);transform-origin:0 50%;left:759px;">Isotrop | linear elastisch</span>
<span class="t " style="top:1044.5px;line-height:16px;height:16px;transform:scaleX(0.8989);transform-origin:100% 50%;right:566px;">210000.0</span>
<span class="t " style="top:1044.5px;line-height:16px;height:16px;transform:scaleX(0.8988);transform-origin:100% 50%;right:466px;">80769.2</span>
<span class="t " style="top:1044.5px;line-height:16px;height:16px;transform:scaleX(0.8991);transform-origin:100% 50%;right:366px;">0.300</span>
<span class="t " style="top:1044.5px;line-height:16px;height:16px;transform:scaleX(0.8991);transform-origin:100% 50%;right:266px;">78.50</span>
<span class="t " style="top:1044.5px;line-height:16px;height:16px;transform:scaleX(0.8988);transform-origin:100% 50%;right:166px;">7850.00</span>
<span class="t " style="top:1044.5px;line-height:16px;height:16px;transform:scaleX(0.8989);transform-origin:100% 50%;right:66px;">0.000012</span>
<div class="a" style="left:1581px;top:1003px;width:17px;height:134px;background:#f0f0f0;"></div>
<div class="a" style="left:1582px;top:1020px;width:15px;height:55px;background:#cdcdcd;"></div>
<svg class="a" style="left:1581px;top:1003px;" width="16" height="134" viewBox="0 0 16 134"><path d="M4.500 10l3.500-3.500 3.500 3.500M4.500 123l3.500 3.500 3.500-3.500" stroke="#5a5a5a" stroke-width="2" fill="none"/></svg>
<div class="a" style="left:329px;top:1137px;width:1269px;height:16px;background:#f0f0f0;"></div>
<div class="a" style="left:346px;top:1137px;width:1107px;height:16px;background:#cdcdcd;"></div>
<svg class="a" style="left:329px;top:1137px;" width="1269" height="16" viewBox="0 0 1269 16"><path d="M11.500 4.500L8 8l3.500 3.500M1242.500 4.500l3.500 3.500-3.500 3.500" stroke="#505050" stroke-width="1.600" fill="none"/></svg>
<div class="a" style="left:328px;top:1154px;width:1271px;height:22px;background:#f5f5f5;"></div>
<svg class="a" style="left:330px;top:1157px;" width="130" height="14" viewBox="0 0 130 14"><path d="M3.500 3v8" stroke="#9a9a9a" stroke-width="1.500"/><path d="M10 3v8l-5-4z" fill="#9a9a9a"/><path d="M26.500 3v8l-5-4z" fill="#9a9a9a"/><path d="M103 3v8l5-4z" fill="#555"/><path d="M119 3v8l5-4z" fill="#555"/><path d="M125.500 3v8" stroke="#555" stroke-width="1.500"/></svg>
<span class="t " style="top:1156.5px;line-height:16px;height:16px;transform:scaleX(0.9338);transform-origin:0 50%;left:373.5px;">1 von 13</span>
<div class="a" style="left:537px;top:1153px;width:81px;height:21px;background:#f0f0f0;box-sizing:border-box;border:1px solid #cfcfda;border-top:none;"></div>
<span class="t " style="top:1155.5px;line-height:16px;height:16px;transform:scaleX(0.9699);transform-origin:50% 50%;left:277px;width:600px;text-align:center;">Querschnitte</span>
<div class="a" style="left:618px;top:1153px;width:60px;height:21px;background:#f0f0f0;box-sizing:border-box;border:1px solid #cfcfda;border-top:none;"></div>
<span class="t " style="top:1155.5px;line-height:16px;height:16px;transform:scaleX(0.9540);transform-origin:50% 50%;left:347.5px;width:600px;text-align:center;">Dicken</span>
<div class="a" style="left:678px;top:1153px;width:62px;height:21px;background:#f0f0f0;box-sizing:border-box;border:1px solid #cfcfda;border-top:none;"></div>
<span class="t " style="top:1155.5px;line-height:16px;height:16px;transform:scaleX(0.9725);transform-origin:50% 50%;left:408.5px;width:600px;text-align:center;">Knoten</span>
<div class="a" style="left:740px;top:1153px;width:61px;height:21px;background:#f0f0f0;box-sizing:border-box;border:1px solid #cfcfda;border-top:none;"></div>
<span class="t " style="top:1155.5px;line-height:16px;height:16px;transform:scaleX(0.9678);transform-origin:50% 50%;left:470px;width:600px;text-align:center;">Linien</span>
<div class="a" style="left:801px;top:1153px;width:61px;height:21px;background:#f0f0f0;box-sizing:border-box;border:1px solid #cfcfda;border-top:none;"></div>
<span class="t " style="top:1155.5px;line-height:16px;height:16px;transform:scaleX(0.9248);transform-origin:50% 50%;left:531px;width:600px;text-align:center;">Stäbe</span>
<div class="a" style="left:862px;top:1153px;width:61px;height:21px;background:#f0f0f0;box-sizing:border-box;border:1px solid #cfcfda;border-top:none;"></div>
<span class="t " style="top:1155.5px;line-height:16px;height:16px;transform:scaleX(0.9367);transform-origin:50% 50%;left:592px;width:600px;text-align:center;">Flächen</span>
<div class="a" style="left:923px;top:1153px;width:74px;height:21px;background:#f0f0f0;box-sizing:border-box;border:1px solid #cfcfda;border-top:none;"></div>
<span class="t " style="top:1155.5px;line-height:16px;height:16px;transform:scaleX(1.0210);transform-origin:50% 50%;left:659.5px;width:600px;text-align:center;">Öffnungen</span>
<div class="a" style="left:997px;top:1153px;width:95px;height:21px;background:#f0f0f0;box-sizing:border-box;border:1px solid #cfcfda;border-top:none;"></div>
<span class="t " style="top:1155.5px;line-height:16px;height:16px;transform:scaleX(0.9787);transform-origin:50% 50%;left:744px;width:600px;text-align:center;">Volumenkörper</span>
<div class="a" style="left:1092px;top:1153px;width:73px;height:21px;background:#f0f0f0;box-sizing:border-box;border:1px solid #cfcfda;border-top:none;"></div>
<span class="t " style="top:1155.5px;line-height:16px;height:16px;transform:scaleX(0.9388);transform-origin:50% 50%;left:828px;width:600px;text-align:center;">Liniensätze</span>
<div class="a" style="left:1165px;top:1153px;width:65px;height:21px;background:#f0f0f0;box-sizing:border-box;border:1px solid #cfcfda;border-top:none;"></div>
<span class="t " style="top:1155.5px;line-height:16px;height:16px;transform:scaleX(0.9180);transform-origin:50% 50%;left:897px;width:600px;text-align:center;">Stabsätze</span>
<div class="a" style="left:1230px;top:1153px;width:82px;height:21px;background:#f0f0f0;box-sizing:border-box;border:1px solid #cfcfda;border-top:none;"></div>
<span class="t " style="top:1155.5px;line-height:16px;height:16px;transform:scaleX(0.9247);transform-origin:50% 50%;left:970.5px;width:600px;text-align:center;">Flächensätze</span>
<div class="a" style="left:1312px;top:1153px;width:88px;height:21px;background:#f0f0f0;box-sizing:border-box;border:1px solid #cfcfda;border-top:none;"></div>
<span class="t " style="top:1155.5px;line-height:16px;height:16px;transform:scaleX(0.9550);transform-origin:50% 50%;left:1055.5px;width:600px;text-align:center;">Volumensätze</span>
<div class="a" style="left:462px;top:1153px;width:75px;height:23px;background:#fff;box-sizing:border-box;border:1px solid #cfcfda;border-top:none;"></div>
<span class="t " style="top:1156.5px;line-height:16px;height:16px;transform:scaleX(0.9710);transform-origin:50% 50%;left:199.5px;width:600px;text-align:center;">Materialien</span>
<div class="a" style="left:1px;top:1176px;width:1598px;height:23px;background:#f5f5f5;"></div>
<div class="a" style="left:722px;top:1179px;width:35px;height:19px;background:#f0f0f0;box-sizing:border-box;border:1px solid #dcdcdc;"></div>
<span class="t " style="top:1180.5px;line-height:16px;height:16px;transform:scaleX(0.8264);transform-origin:50% 50%;left:439.5px;width:600px;text-align:center;">FANG</span>
<div class="a" style="left:760px;top:1179px;width:48px;height:19px;background:#f0f0f0;box-sizing:border-box;border:1px solid #dcdcdc;"></div>
<span class="t " style="top:1180.5px;line-height:16px;height:16px;transform:scaleX(0.8010);transform-origin:50% 50%;left:484px;width:600px;text-align:center;">RASTER</span>
<div class="a" style="left:810px;top:1179px;width:49px;height:19px;background:#f0f0f0;box-sizing:border-box;border:1px solid #dcdcdc;"></div>
<span class="t " style="top:1180.5px;line-height:16px;height:16px;transform:scaleX(0.7948);transform-origin:50% 50%;left:534.5px;width:600px;text-align:center;">LRASTER</span>
<div class="a" style="left:862px;top:1179px;width:45px;height:19px;background:#f0f0f0;box-sizing:border-box;border:1px solid #dcdcdc;"></div>
<span class="t " style="top:1180.5px;line-height:16px;height:16px;transform:scaleX(0.8568);transform-origin:50% 50%;left:584.5px;width:600px;text-align:center;">OFANG</span>
<span class="t " style="top:1180.5px;line-height:16px;height:16px;transform:scaleX(0.9645);transform-origin:0 50%;left:914px;">Sichtbarkeitsmodus</span>
<span class="t " style="top:1180.5px;line-height:16px;height:16px;transform:scaleX(0.8567);transform-origin:0 50%;left:1135px;">KS: Global XYZ</span>
<span class="t " style="top:1180.5px;line-height:16px;height:16px;transform:scaleX(0.8715);transform-origin:0 50%;left:1291px;">Ebene: XY</span>
<span class="t " style="top:1180.5px;line-height:16px;height:16px;transform:scaleX(0.8866);transform-origin:0 50%;left:1357px;">X: -0.471 m</span>
<span class="t " style="top:1180.5px;line-height:16px;height:16px;transform:scaleX(0.8715);transform-origin:0 50%;left:1433px;">Y: 1.698 m</span>
<span class="t " style="top:1180.5px;line-height:16px;height:16px;transform:scaleX(0.8891);transform-origin:0 50%;left:1509px;">Z: 0.000 m</span>
<div class="a" style="left:1024px;top:1180px;width:1px;height:18px;background:#dcdcdc;"></div>
<div class="a" style="left:1130px;top:1180px;width:1px;height:18px;background:#dcdcdc;"></div>
<div class="a" style="left:1286px;top:1180px;width:1px;height:18px;background:#dcdcdc;"></div>
<div class="a" style="left:1352px;top:1180px;width:1px;height:18px;background:#dcdcdc;"></div>
<div class="a" style="left:1428px;top:1180px;width:1px;height:18px;background:#dcdcdc;"></div>
<div class="a" style="left:1504px;top:1180px;width:1px;height:18px;background:#dcdcdc;"></div>
<div class="a" style="left:1580px;top:1180px;width:1px;height:18px;background:#dcdcdc;"></div>
<svg class="a" style="left:1585px;top:1185px;" width="12" height="12" viewBox="0 0 12 12"><path d="M9 1.500h1M6 4.500h1M9 4.500h1M3 7.500h1M6 7.500h1M9 7.500h1M0 10.500h1M3 10.500h1M6 10.500h1M9 10.500h1" stroke="#b0b0b0" stroke-width="1.500"/></svg>
<div class="a" style="left:0px;top:31px;width:1px;height:1169px;background:#0078d7;"></div>
<div class="a" style="left:1599px;top:31px;width:1px;height:1169px;background:#0078d7;"></div>
<div class="a" style="left:0px;top:1199px;width:1600px;height:1px;background:#0078d7;"></div>
</body></html>
